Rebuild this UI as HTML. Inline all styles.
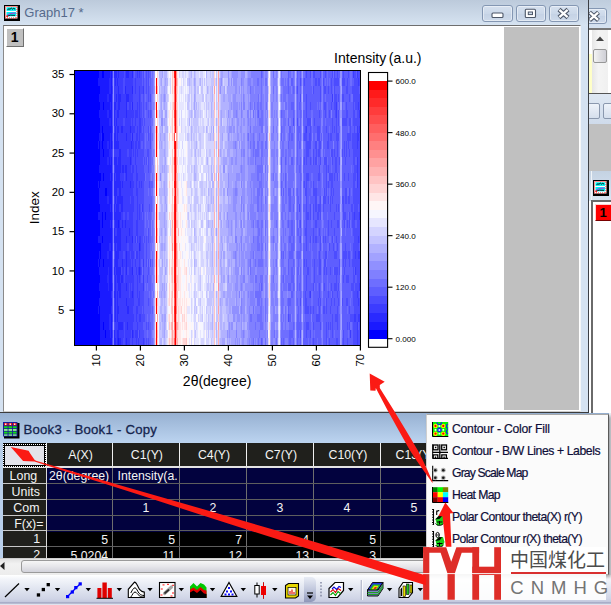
<!DOCTYPE html>
<html><head><meta charset="utf-8"><title>Graph17</title>
<style>

html,body{margin:0;padding:0;background:#fff}
#root{position:relative;width:611px;height:605px;overflow:hidden;background:#fff;font-family:"Liberation Sans","Noto Sans CJK SC",sans-serif;}
#root div,#root svg,#root span{position:absolute;box-sizing:border-box}
.t{white-space:nowrap;line-height:1}
svg text{font-family:"Liberation Sans","Noto Sans CJK SC",sans-serif}
.wbtn{border:1px solid #8497b3;border-radius:3px;background:linear-gradient(#d6e1ef,#cbd8e9 50%,#c4d2e5 51%,#cedaea);box-shadow:inset 0 0 0 1px rgba(255,255,255,.45)}
.cell{color:#f4f4f4;font-size:12px;line-height:15px;white-space:nowrap;overflow:hidden}
.mi{left:452px;font-size:12px;color:#0e0e38;-webkit-text-stroke:.2px #0e0e38;white-space:nowrap;line-height:14px;height:14px}

</style></head><body>
<div id="root">

<div style="left:588px;top:0;width:23px;height:29px;background:linear-gradient(#bfcddd,#d6e3f1)"></div>
<div class="wbtn" style="left:577px;top:8px;width:30px;height:16px"></div>
<svg style="left:589px;top:8px" width="20" height="16" viewBox="589 8 20 16"><path d="M589.500 12.300l9 8M598.500 12.300l-9 8" stroke="#4d5768" stroke-width="4.400" fill="none"/><path d="M589.900 12.700l8.200 7.200M598.100 12.700l-8.200 7.200" stroke="#fff" stroke-width="2.300" fill="none"/></svg>
<div style="left:588px;top:28px;width:23px;height:1.5px;background:#777"></div>
<div style="left:588px;top:29.5px;width:23px;height:63.5px;background:#fff"></div>
<div style="left:589px;top:53.5px;width:3px;height:39px;background:#ffffc8"></div>
<div style="left:592px;top:30px;width:16px;height:63px;background:linear-gradient(90deg,#e6e6e6,#f4f4f4 40%,#f0f0f0)"></div>
<svg style="left:592px;top:30px" width="16" height="16"><path d="M4 11l4-4.5 4 4.5z" fill="#444"/></svg>
<div style="left:592.5px;top:48.5px;width:14.5px;height:14.5px;border:1px solid #979797;border-radius:2px;background:linear-gradient(90deg,#f4f4f4,#dcdce0 60%,#cfcfd6)"></div>
<div style="left:588px;top:92.5px;width:23px;height:1.5px;background:#555"></div>
<div style="left:588px;top:94px;width:23px;height:30px;background:linear-gradient(#dfe8f3,#cfdbeb)"></div>
<div style="left:584px;top:103px;width:15.5px;height:16px;border:1px solid #8a98ae;border-radius:2px;background:linear-gradient(#eef3fa,#d5dfed)"></div>
<div style="left:603px;top:103px;width:15px;height:16px;border:1px solid #8a98ae;border-radius:2px;background:linear-gradient(#eef3fa,#d5dfed)"></div>
<div style="left:588px;top:124px;width:23px;height:47px;background:#c0c0c0"></div>
<div style="left:588px;top:171px;width:23px;height:30px;background:linear-gradient(#c4d2e2,#d8e5f3)"></div>
<div style="left:588px;top:201px;width:23px;height:215px;background:#fff"></div>
<div style="left:590.5px;top:171px;width:1px;height:243px;background:#f0f4f8"></div>
<div style="left:591px;top:201px;width:2px;height:213px;background:#6a6a6a"></div>
<div style="left:591px;top:200px;width:20px;height:1.5px;background:#6a6a6a"></div>
<svg style="left:593px;top:180px" width="16" height="16" viewBox="0 0 16 16"><rect x="0" y="0" width="16" height="16" fill="#000"/><rect x="1" y="1" width="12.5" height="12.5" fill="#fff"/>
<rect x="1.5" y="1.5" width="11.5" height="11.5" fill="none" stroke="#ff2020" stroke-width="1" stroke-dasharray="1 1"/>
<rect x="2.5" y="2.3" width="9.7" height="3.6" fill="#00f0f0"/><rect x="2.5" y="7" width="9.7" height="4.3" fill="#00f0f0"/>
<path d="M3.5 4.6l1.5-.8 1 .5 1.3-1.2 1.2 1 1.2-.8 1.4.9" stroke="#000" stroke-width=".9" fill="none"/>
<path d="M3 10.5c2-2 5-2.6 8.5-2.4" stroke="#c020e0" stroke-width="1" fill="none"/><path d="M3.5 11l3-.8 4.5.2" stroke="#000" stroke-width=".8" fill="none"/>
<rect x="2.3" y="10.5" width="1.6" height="1.6" fill="#ff0000"/></svg>
<div style="left:595px;top:204px;width:17px;height:16.5px;background:#ff0000;border-top:1px solid #ffd0d0;border-left:1px solid #ffd0d0;border-bottom:1px solid #7a0000"></div>
<div class="t" style="left:599.5px;top:205.5px;font-size:13px;font-weight:bold;color:#000">1</div>


<div style="left:0;top:0;width:588.5px;height:413px;background:#d5e2f1"></div>
<div style="left:0;top:0;width:588px;height:26px;background:linear-gradient(#bccadb,#d7e4f2)"></div>
<div style="left:587.6px;top:0;width:1.7px;height:413px;background:#3c3f45"></div>
<div style="left:2.5px;top:25px;width:578px;height:386.5px;background:#fff;border-top:1.5px solid #6e6e6e;border-left:1.5px solid #8a8a8a;border-right:1.5px solid #f4f6f8;border-bottom:1.5px solid #cdcdcd"></div>
<div style="left:504px;top:26.5px;width:75px;height:383.5px;background:#c0c0c0"></div>
<div style="left:0;top:412px;width:588px;height:1px;background:#3c3c3c"></div>
<svg style="left:4px;top:5px" width="16" height="16" viewBox="0 0 16 16"><rect x="0" y="0" width="16" height="16" fill="#000"/><rect x="1" y="1" width="12.5" height="12.5" fill="#fff"/>
<rect x="1.5" y="1.5" width="11.5" height="11.5" fill="none" stroke="#ff2020" stroke-width="1" stroke-dasharray="1 1"/>
<rect x="2.5" y="2.3" width="9.7" height="3.6" fill="#00f0f0"/><rect x="2.5" y="7" width="9.7" height="4.3" fill="#00f0f0"/>
<path d="M3.5 4.6l1.5-.8 1 .5 1.3-1.2 1.2 1 1.2-.8 1.4.9" stroke="#000" stroke-width=".9" fill="none"/>
<path d="M3 10.5c2-2 5-2.6 8.5-2.4" stroke="#c020e0" stroke-width="1" fill="none"/><path d="M3.5 11l3-.8 4.5.2" stroke="#000" stroke-width=".8" fill="none"/>
<rect x="2.3" y="10.5" width="1.6" height="1.6" fill="#ff0000"/></svg>
<div class="t" style="left:24.3px;top:6.2px;font-size:13px;color:#566a8c">Graph17 *</div>
<div class="wbtn" style="left:482px;top:5px;width:31px;height:16.5px"></div>
<div class="wbtn" style="left:515.5px;top:5px;width:30.5px;height:16.5px"></div>
<div class="wbtn" style="left:548.5px;top:5px;width:30.5px;height:16.5px"></div>
<svg style="left:482px;top:5px" width="100" height="17" viewBox="482 5 100 17">
<rect x="492" y="13" width="11" height="4.500" rx="1" fill="#fff" stroke="#4d5768" stroke-width="1.100"/>
<rect x="525.300" y="9.200" width="10.200" height="8.300" rx="1" fill="#fff" stroke="#4d5768" stroke-width="1.100"/><rect x="528.300" y="12" width="4.200" height="2.600" fill="#cfdbea" stroke="#4d5768" stroke-width="1"/>
<path d="M559 9.500l9 8M568 9.500l-9 8" stroke="#4d5768" stroke-width="4.400" fill="none"/><path d="M559.400 9.900l8.200 7.200M567.600 9.900l-8.200 7.200" stroke="#fff" stroke-width="2.300" fill="none"/>
</svg>
<div style="left:5.5px;top:28px;width:18.5px;height:18.5px;background:#c0c0c0;border-top:1.5px solid #fff;border-left:1.5px solid #fff;border-right:1.5px solid #707070;border-bottom:1.5px solid #707070"></div>
<div class="t" style="left:10.8px;top:30.2px;font-size:14px;font-weight:bold;color:#000">1</div>
<svg style="left:0;top:0" width="611" height="605" viewBox="0 0 611 605">
<g fill="none" stroke-width="1" shape-rendering="crispEdges"><path stroke="#0000ff" d="M75.5 71V345M76.5 71V345M77.5 71V345M78.5 71V345M79.5 71V345M80.5 71V345M81.5 71V345M82.5 71V345M83.5 71V345M84.5 71V345M85.5 71V345M86.5 71V345M87.5 71V345M88.5 71V345M89.5 71V345M90.5 71V345M91.5 71V345M92.5 71V345M93.5 71V345M94.5 71V345M95.5 71V345M96.5 71V345M97.5 71V345M98.5 71V78M98.5 86V141M98.5 149V181M98.5 188V212M98.5 220V236M98.5 243V259M98.5 267V306M98.5 314V345M99.5 86V94M99.5 102V110M99.5 118V133M99.5 141V165M99.5 173V188M99.5 204V212M99.5 220V236M99.5 243V251M99.5 259V267M99.5 275V283M99.5 291V298M99.5 306V345M100.5 173V181M100.5 243V259M102.5 71V78M102.5 126V149M102.5 212V228M102.5 236V243M103.5 71V78M103.5 102V110M103.5 133V141M103.5 149V157M103.5 173V181M103.5 259V267M103.5 322V330M105.5 188V196M105.5 212V220M105.5 330V338M106.5 188V196"/><path stroke="#1a1aff" d="M98.5 78V86M98.5 141V149M98.5 181V188M98.5 212V220M98.5 236V243M98.5 259V267M98.5 306V314M99.5 71V86M99.5 94V102M99.5 110V118M99.5 133V141M99.5 165V173M99.5 188V204M99.5 212V220M99.5 236V243M99.5 251V259M99.5 267V275M99.5 283V291M99.5 298V306M100.5 71V173M100.5 181V243M100.5 259V345M101.5 71V133M101.5 141V345M102.5 78V126M102.5 149V212M102.5 228V236M102.5 243V345M103.5 78V102M103.5 110V133M103.5 141V149M103.5 157V173M103.5 181V259M103.5 267V322M103.5 330V345M104.5 71V345M105.5 71V188M105.5 196V212M105.5 220V330M105.5 338V345M106.5 71V188M106.5 196V345M107.5 71V94M107.5 102V110M107.5 118V141M107.5 149V157M107.5 165V196M107.5 204V251M107.5 259V275M107.5 283V345M108.5 71V94M108.5 102V110M108.5 118V141M108.5 149V157M108.5 165V196M108.5 204V251M108.5 259V267M108.5 291V345M109.5 71V78M109.5 94V118M109.5 126V149M109.5 157V243M109.5 251V314M109.5 330V345M110.5 94V102M110.5 110V118M110.5 126V133M110.5 165V173M110.5 181V204M110.5 212V220M110.5 228V243M110.5 251V314M110.5 338V345M111.5 71V149M111.5 157V291M111.5 298V306M111.5 314V345M118.5 220V228M118.5 338V345"/><path stroke="#2a2aff" d="M101.5 133V141M107.5 94V102M107.5 110V118M107.5 141V149M107.5 157V165M107.5 196V204M107.5 251V259M107.5 275V283M108.5 94V102M108.5 110V118M108.5 141V149M108.5 157V165M108.5 196V204M108.5 251V259M108.5 267V291M109.5 78V94M109.5 118V126M109.5 149V157M109.5 243V251M109.5 314V330M110.5 71V94M110.5 102V110M110.5 118V126M110.5 133V165M110.5 173V181M110.5 204V212M110.5 220V228M110.5 243V251M110.5 314V338M111.5 149V157M111.5 291V298M111.5 306V314M114.5 71V78M114.5 102V126M114.5 133V149M114.5 157V165M114.5 173V196M114.5 204V220M114.5 228V243M114.5 267V275M114.5 291V298M114.5 330V345M115.5 71V86M115.5 102V110M115.5 126V149M115.5 157V173M115.5 181V204M115.5 212V228M115.5 236V267M115.5 275V322M115.5 338V345M116.5 71V78M116.5 94V102M116.5 118V126M116.5 141V149M116.5 157V196M116.5 204V228M116.5 236V243M116.5 251V275M117.5 78V86M117.5 110V118M117.5 126V149M117.5 165V188M117.5 196V283M117.5 291V322M117.5 330V345M118.5 71V78M118.5 86V118M118.5 126V133M118.5 141V149M118.5 157V188M118.5 196V220M118.5 228V259M118.5 267V291M118.5 306V314M118.5 322V338M119.5 94V110M119.5 149V204M119.5 212V251M119.5 267V298M119.5 322V330M119.5 338V345M120.5 94V102M120.5 149V173M120.5 181V204M120.5 212V220M120.5 228V251M120.5 267V275M120.5 283V298M120.5 322V330M120.5 338V345M121.5 126V133M121.5 196V212M121.5 275V283M121.5 322V330M122.5 126V133M122.5 165V173M122.5 181V188M122.5 196V212M122.5 220V228M122.5 259V267M122.5 275V283M122.5 322V330M123.5 165V173M125.5 86V94M125.5 165V173M125.5 220V228M126.5 71V78M126.5 94V118M126.5 133V141M126.5 165V181M126.5 236V243M126.5 251V275M126.5 283V291M126.5 298V306M126.5 338V345M127.5 71V78M127.5 94V102M127.5 306V314M127.5 322V330M128.5 71V78M128.5 94V102M128.5 306V314M129.5 228V236M130.5 126V133M130.5 157V165M130.5 181V188M131.5 141V149M132.5 71V78M132.5 86V94M132.5 102V110M132.5 133V141M132.5 236V243M132.5 267V275M132.5 291V298M132.5 330V338M139.5 243V251M139.5 267V275"/><path stroke="#3c3cff" d="M112.5 71V78M112.5 86V94M112.5 126V133M112.5 141V149M112.5 173V181M112.5 212V220M112.5 228V251M112.5 283V291M112.5 314V322M112.5 330V338M114.5 78V102M114.5 126V133M114.5 149V157M114.5 165V173M114.5 196V204M114.5 220V228M114.5 243V251M114.5 259V267M114.5 275V291M114.5 298V322M115.5 86V102M115.5 110V126M115.5 149V157M115.5 173V181M115.5 204V212M115.5 228V236M115.5 267V275M115.5 322V338M116.5 78V94M116.5 102V118M116.5 126V141M116.5 149V157M116.5 196V204M116.5 228V236M116.5 243V251M116.5 275V345M117.5 71V78M117.5 86V110M117.5 118V126M117.5 149V165M117.5 188V196M117.5 283V291M117.5 322V330M118.5 78V86M118.5 118V126M118.5 133V141M118.5 149V157M118.5 188V196M118.5 259V267M118.5 291V306M118.5 314V322M119.5 71V94M119.5 110V149M119.5 204V212M119.5 251V267M119.5 298V322M119.5 330V338M120.5 71V94M120.5 102V149M120.5 173V181M120.5 204V212M120.5 220V228M120.5 251V267M120.5 275V283M120.5 298V322M120.5 330V338M121.5 71V126M121.5 133V196M121.5 212V267M121.5 283V322M121.5 330V345M122.5 71V126M122.5 133V165M122.5 173V181M122.5 188V196M122.5 212V220M122.5 228V259M122.5 267V275M122.5 283V322M122.5 330V345M123.5 71V78M123.5 94V118M123.5 126V165M123.5 173V212M123.5 220V251M123.5 259V338M124.5 94V118M124.5 126V173M124.5 181V212M124.5 220V251M124.5 259V267M124.5 283V322M125.5 71V86M125.5 94V165M125.5 173V220M125.5 228V345M126.5 78V94M126.5 118V133M126.5 141V165M126.5 181V236M126.5 243V251M126.5 275V283M126.5 291V298M126.5 306V338M127.5 78V94M127.5 110V149M127.5 157V212M127.5 220V243M127.5 251V267M127.5 275V306M127.5 314V322M127.5 330V345M128.5 78V94M128.5 110V149M128.5 157V212M128.5 220V243M128.5 251V267M128.5 275V306M128.5 314V345M129.5 71V228M129.5 236V283M129.5 298V345M130.5 71V126M130.5 133V157M130.5 165V181M130.5 188V196M130.5 204V251M130.5 259V338M131.5 71V102M131.5 110V118M131.5 126V133M131.5 149V165M131.5 173V259M131.5 267V283M131.5 291V330M132.5 78V86M132.5 94V102M132.5 110V133M132.5 141V149M132.5 165V236M132.5 243V267M132.5 275V291M132.5 298V330M132.5 338V345M133.5 110V118M133.5 126V133M133.5 141V157M133.5 165V173M133.5 181V188M133.5 196V212M133.5 251V259M133.5 275V306M133.5 314V322M133.5 330V338M134.5 126V133M135.5 78V94M135.5 110V126M135.5 141V165M135.5 236V243M135.5 259V267M135.5 330V338M136.5 110V118M136.5 133V149M136.5 165V196M136.5 220V236M136.5 251V259M136.5 267V275M136.5 306V322M136.5 330V345M137.5 71V78M137.5 102V118M137.5 126V141M137.5 149V157M137.5 173V181M137.5 188V243M137.5 251V259M137.5 275V298M137.5 306V314M137.5 322V338M138.5 141V149M138.5 267V275M138.5 298V306M138.5 338V345M139.5 71V78M139.5 86V149M139.5 181V188M139.5 204V220M139.5 236V243M139.5 251V267M139.5 275V283M139.5 291V306M139.5 314V322M139.5 330V338M140.5 118V133M140.5 236V251M140.5 267V275M140.5 314V322M141.5 181V188M142.5 204V212M143.5 86V94M143.5 259V267M143.5 275V291M143.5 338V345M306.5 126V133M310.5 291V298M332.5 94V102M336.5 102V118M350.5 330V338M353.5 71V78M354.5 212V220M354.5 314V322M355.5 251V259M355.5 267V275M355.5 314V322M357.5 71V78M357.5 126V149M357.5 157V188M357.5 291V298M357.5 322V345M358.5 78V86M358.5 102V110M358.5 133V141M358.5 236V243M358.5 251V259M358.5 298V306M358.5 314V322M359.5 110V118M359.5 126V133M359.5 212V220M359.5 251V259M359.5 283V291M359.5 314V322"/><path stroke="#4c4cff" d="M112.5 78V86M112.5 94V126M112.5 133V141M112.5 149V173M112.5 181V212M112.5 220V228M112.5 251V283M112.5 291V314M112.5 322V330M112.5 338V345M114.5 251V259M114.5 322V330M121.5 267V275M123.5 78V94M123.5 118V126M123.5 212V220M123.5 251V259M123.5 338V345M124.5 71V94M124.5 118V126M124.5 173V181M124.5 212V220M124.5 251V259M124.5 267V283M124.5 322V345M127.5 102V110M127.5 149V157M127.5 212V220M127.5 243V251M127.5 267V275M128.5 102V110M128.5 149V157M128.5 212V220M128.5 243V251M128.5 267V275M129.5 283V298M130.5 196V204M130.5 251V259M130.5 338V345M131.5 102V110M131.5 118V126M131.5 133V141M131.5 165V173M131.5 259V267M131.5 283V291M131.5 330V345M132.5 149V165M133.5 71V110M133.5 118V126M133.5 133V141M133.5 157V165M133.5 173V181M133.5 188V196M133.5 212V251M133.5 259V275M133.5 306V314M133.5 322V330M133.5 338V345M134.5 78V126M134.5 133V345M135.5 71V78M135.5 94V110M135.5 126V141M135.5 165V236M135.5 243V251M135.5 267V330M135.5 338V345M136.5 71V110M136.5 118V133M136.5 149V165M136.5 196V220M136.5 243V251M136.5 259V267M136.5 275V306M136.5 322V330M137.5 78V102M137.5 118V126M137.5 141V149M137.5 157V173M137.5 181V188M137.5 243V251M137.5 259V275M137.5 298V306M137.5 314V322M137.5 338V345M138.5 71V141M138.5 149V267M138.5 275V298M138.5 306V330M139.5 78V86M139.5 149V181M139.5 188V204M139.5 220V236M139.5 283V291M139.5 306V314M139.5 322V330M139.5 338V345M140.5 71V118M140.5 133V236M140.5 251V267M140.5 275V314M140.5 322V345M141.5 71V94M141.5 102V141M141.5 149V181M141.5 188V204M141.5 212V259M141.5 267V275M141.5 283V345M142.5 86V94M142.5 118V126M142.5 133V141M142.5 149V204M142.5 220V259M142.5 283V306M142.5 314V345M143.5 71V86M143.5 94V118M143.5 126V157M143.5 165V236M143.5 243V259M143.5 267V275M143.5 291V322M143.5 330V338M144.5 118V126M144.5 157V165M144.5 173V181M144.5 236V243M144.5 314V322M144.5 338V345M146.5 71V94M146.5 102V110M146.5 157V165M146.5 236V267M146.5 322V330M146.5 338V345M147.5 149V157M147.5 275V283M148.5 71V102M148.5 110V118M148.5 126V141M148.5 149V173M148.5 228V243M148.5 259V275M148.5 298V306M148.5 322V330M148.5 338V345M149.5 181V188M149.5 204V212M150.5 94V102M150.5 110V118M150.5 126V149M150.5 259V267M288.5 314V322M293.5 118V126M297.5 86V94M297.5 118V126M299.5 204V212M300.5 78V86M300.5 94V102M300.5 220V228M300.5 236V243M300.5 298V306M300.5 330V338M304.5 78V86M304.5 133V141M304.5 157V165M304.5 181V188M304.5 259V267M305.5 126V141M305.5 188V196M305.5 228V236M305.5 291V314M306.5 71V78M306.5 94V118M306.5 133V165M306.5 173V251M306.5 259V267M306.5 275V291M306.5 298V314M306.5 322V338M307.5 118V126M307.5 141V157M307.5 173V181M307.5 212V220M307.5 267V275M307.5 306V314M307.5 322V330M308.5 118V126M308.5 141V157M308.5 173V181M308.5 212V220M308.5 267V275M308.5 306V314M308.5 322V330M309.5 118V126M309.5 133V149M309.5 291V298M310.5 71V78M310.5 102V110M310.5 118V149M310.5 157V165M310.5 204V220M310.5 236V243M310.5 306V314M310.5 330V338M313.5 71V78M313.5 86V94M313.5 149V165M313.5 181V196M313.5 204V220M313.5 228V243M313.5 283V291M313.5 306V314M313.5 322V330M313.5 338V345M314.5 71V78M314.5 118V126M314.5 188V196M314.5 259V283M315.5 78V86M315.5 141V149M315.5 157V165M315.5 188V212M315.5 220V228M315.5 236V243M316.5 78V86M316.5 141V165M316.5 188V212M316.5 220V228M316.5 236V243M316.5 314V322M317.5 126V141M317.5 212V220M317.5 314V322M318.5 78V86M318.5 126V141M318.5 149V157M318.5 173V181M318.5 204V220M318.5 298V306M318.5 314V322M319.5 78V86M319.5 110V118M319.5 126V157M319.5 165V181M319.5 204V212M319.5 228V236M319.5 251V275M319.5 283V298M319.5 306V322M320.5 71V78M320.5 86V102M320.5 141V149M320.5 157V165M320.5 196V220M320.5 236V251M320.5 259V275M320.5 298V306M320.5 322V330M323.5 78V86M323.5 196V212M323.5 236V243M323.5 306V314M324.5 86V94M324.5 102V110M324.5 157V165M324.5 188V204M324.5 259V275M324.5 283V291M324.5 306V314M325.5 71V78M325.5 86V94M325.5 102V118M325.5 157V165M325.5 196V204M325.5 236V243M325.5 251V267M326.5 126V133M326.5 157V196M326.5 251V259M326.5 267V275M326.5 298V314M326.5 322V345M327.5 141V149M328.5 86V94M328.5 133V149M328.5 165V173M328.5 181V188M328.5 196V204M328.5 220V236M328.5 291V298M328.5 322V330M329.5 110V118M329.5 173V181M329.5 243V251M329.5 338V345M330.5 133V141M330.5 173V181M330.5 196V212M330.5 267V275M330.5 306V314M330.5 322V330M331.5 78V94M331.5 102V110M331.5 133V141M331.5 149V157M331.5 173V196M331.5 220V228M331.5 283V291M331.5 298V306M332.5 71V78M332.5 118V133M332.5 149V165M332.5 173V188M332.5 196V204M332.5 236V243M332.5 291V298M332.5 314V338M333.5 188V196M333.5 243V251M334.5 71V110M334.5 126V133M334.5 149V157M334.5 173V181M334.5 212V220M334.5 228V236M334.5 251V259M334.5 267V275M334.5 283V291M334.5 298V306M335.5 78V86M335.5 94V118M335.5 157V173M335.5 251V259M335.5 267V275M335.5 283V291M335.5 314V322M336.5 78V86M336.5 94V102M336.5 118V141M336.5 157V173M336.5 204V212M336.5 236V243M336.5 251V259M336.5 267V291M336.5 314V322M336.5 338V345M337.5 71V86M337.5 133V157M337.5 173V181M337.5 220V228M337.5 243V251M337.5 267V275M337.5 291V298M337.5 306V330M337.5 338V345M338.5 78V86M338.5 94V102M338.5 110V126M338.5 133V141M338.5 204V212M338.5 220V228M338.5 283V291M338.5 298V306M339.5 157V165M339.5 259V275M342.5 78V86M342.5 94V102M342.5 118V126M342.5 149V157M342.5 196V204M342.5 298V306M343.5 71V86M343.5 94V102M343.5 118V126M343.5 196V220M343.5 251V267M343.5 275V283M343.5 330V345M344.5 78V86M344.5 118V126M344.5 141V157M344.5 173V181M344.5 212V228M344.5 251V259M344.5 267V275M345.5 118V126M345.5 157V165M345.5 188V204M345.5 212V220M345.5 243V267M346.5 86V94M346.5 102V126M346.5 141V157M346.5 188V204M346.5 251V259M346.5 275V283M346.5 298V306M347.5 78V94M347.5 110V118M347.5 133V141M347.5 220V228M347.5 275V283M347.5 298V306M347.5 322V330M347.5 338V345M348.5 71V78M348.5 133V149M348.5 173V181M348.5 196V204M348.5 251V259M348.5 275V283M349.5 94V102M349.5 118V126M349.5 133V141M349.5 149V157M349.5 188V204M349.5 212V228M349.5 251V267M349.5 306V314M349.5 322V330M350.5 118V141M350.5 314V322M351.5 204V212M351.5 283V291M351.5 314V322M352.5 86V94M352.5 133V149M352.5 204V228M352.5 259V267M352.5 283V291M352.5 314V322M353.5 86V126M353.5 133V165M353.5 173V204M353.5 212V236M353.5 243V306M353.5 314V345M354.5 71V102M354.5 110V212M354.5 220V267M354.5 275V283M354.5 291V314M354.5 322V345M355.5 71V110M355.5 118V126M355.5 133V157M355.5 165V181M355.5 188V220M355.5 228V251M355.5 259V267M355.5 283V314M355.5 322V345M356.5 78V110M356.5 118V126M356.5 133V157M356.5 165V173M356.5 188V220M356.5 228V275M356.5 283V345M357.5 78V126M357.5 149V157M357.5 188V291M357.5 298V322M358.5 71V78M358.5 86V102M358.5 110V133M358.5 141V204M358.5 212V236M358.5 243V251M358.5 259V298M358.5 306V314M358.5 330V345M359.5 71V86M359.5 94V110M359.5 118V126M359.5 133V212M359.5 220V243M359.5 259V283M359.5 298V314M359.5 322V345"/><path stroke="#5e5eff" d="M134.5 71V78M135.5 251V259M136.5 236V243M138.5 330V338M141.5 94V102M141.5 141V149M141.5 204V212M141.5 259V267M141.5 275V283M142.5 71V86M142.5 94V118M142.5 126V133M142.5 141V149M142.5 212V220M142.5 259V267M142.5 275V283M142.5 306V314M143.5 118V126M143.5 157V165M143.5 236V243M143.5 322V330M144.5 78V118M144.5 126V157M144.5 165V173M144.5 181V236M144.5 243V314M144.5 322V338M145.5 71V94M145.5 102V110M145.5 118V133M145.5 149V173M145.5 181V212M145.5 228V283M145.5 291V345M146.5 94V102M146.5 110V157M146.5 165V236M146.5 267V322M146.5 330V338M147.5 71V133M147.5 141V149M147.5 165V212M147.5 220V228M147.5 236V259M147.5 267V275M147.5 291V314M147.5 322V330M147.5 338V345M148.5 102V110M148.5 118V126M148.5 141V149M148.5 173V188M148.5 196V220M148.5 243V259M148.5 275V298M148.5 306V322M148.5 330V338M149.5 71V78M149.5 86V102M149.5 110V126M149.5 133V181M149.5 188V204M149.5 212V259M149.5 267V291M149.5 298V345M150.5 71V94M150.5 102V110M150.5 118V126M150.5 149V173M150.5 181V243M150.5 275V314M150.5 322V345M151.5 110V118M151.5 181V188M151.5 196V212M152.5 181V188M152.5 259V267M152.5 306V314M258.5 110V118M261.5 71V78M261.5 283V291M261.5 338V345M281.5 110V118M281.5 126V141M281.5 157V173M281.5 181V196M281.5 251V259M281.5 338V345M283.5 188V196M283.5 251V259M283.5 275V283M283.5 338V345M285.5 157V165M285.5 173V188M288.5 71V94M288.5 118V126M288.5 141V149M288.5 188V196M288.5 220V228M288.5 259V275M288.5 283V291M288.5 298V314M289.5 126V141M289.5 188V212M289.5 236V243M289.5 251V259M289.5 283V291M289.5 298V306M289.5 314V322M289.5 330V345M290.5 126V133M290.5 188V212M290.5 236V243M290.5 251V259M290.5 283V291M290.5 298V306M290.5 314V322M290.5 330V345M291.5 78V86M291.5 102V110M291.5 133V141M291.5 157V165M291.5 220V236M291.5 243V259M291.5 267V283M291.5 291V298M291.5 330V338M292.5 78V86M292.5 102V110M292.5 133V141M292.5 157V165M292.5 220V236M292.5 243V259M292.5 267V283M292.5 291V298M292.5 330V338M293.5 86V94M293.5 102V118M293.5 188V196M293.5 204V212M293.5 236V251M293.5 259V267M293.5 275V291M293.5 322V330M293.5 338V345M297.5 71V86M297.5 94V118M297.5 126V165M297.5 188V236M297.5 251V259M297.5 267V291M297.5 298V306M297.5 314V345M298.5 126V141M298.5 196V204M298.5 228V236M298.5 251V275M298.5 306V338M299.5 102V110M299.5 126V133M299.5 141V149M299.5 165V173M299.5 220V228M299.5 236V243M299.5 251V259M299.5 283V291M299.5 322V330M300.5 71V78M300.5 86V94M300.5 102V149M300.5 157V220M300.5 228V236M300.5 243V259M300.5 267V298M300.5 306V330M300.5 338V345M303.5 78V102M303.5 110V126M303.5 133V141M303.5 157V173M303.5 181V188M303.5 204V212M303.5 243V275M303.5 291V306M303.5 338V345M304.5 86V102M304.5 110V133M304.5 149V157M304.5 165V181M304.5 204V212M304.5 220V236M304.5 243V259M304.5 267V314M304.5 322V345M305.5 71V126M305.5 141V188M305.5 204V228M305.5 236V291M305.5 314V345M306.5 78V94M306.5 118V126M306.5 165V173M306.5 251V259M306.5 267V275M306.5 291V298M306.5 314V322M306.5 338V345M307.5 71V118M307.5 126V141M307.5 157V173M307.5 181V212M307.5 220V267M307.5 275V306M307.5 314V322M307.5 330V345M308.5 71V118M308.5 126V141M308.5 157V173M308.5 181V212M308.5 220V267M308.5 275V306M308.5 314V322M308.5 330V338M309.5 71V118M309.5 126V133M309.5 149V181M309.5 188V196M309.5 204V243M309.5 251V291M309.5 298V345M310.5 78V102M310.5 110V118M310.5 149V157M310.5 165V204M310.5 220V236M310.5 243V291M310.5 298V306M310.5 314V330M310.5 338V345M311.5 86V110M311.5 126V141M311.5 157V173M311.5 181V188M311.5 196V204M311.5 228V236M311.5 283V291M311.5 306V314M312.5 94V110M312.5 165V173M312.5 196V204M312.5 228V251M312.5 259V267M312.5 283V291M312.5 306V322M312.5 338V345M313.5 78V86M313.5 94V149M313.5 165V181M313.5 196V204M313.5 220V228M313.5 243V283M313.5 291V306M313.5 314V322M313.5 330V338M314.5 78V118M314.5 126V188M314.5 196V259M314.5 291V330M314.5 338V345M315.5 71V78M315.5 86V133M315.5 149V157M315.5 165V188M315.5 212V220M315.5 228V236M315.5 243V345M316.5 71V78M316.5 86V133M316.5 165V188M316.5 212V220M316.5 228V236M316.5 243V314M316.5 322V345M317.5 71V102M317.5 110V126M317.5 149V157M317.5 165V181M317.5 188V196M317.5 204V212M317.5 220V228M317.5 236V243M317.5 259V267M317.5 275V283M317.5 291V306M317.5 322V338M318.5 71V78M318.5 86V126M318.5 141V149M318.5 157V173M318.5 181V196M318.5 220V243M318.5 251V298M318.5 306V314M318.5 322V345M319.5 71V78M319.5 86V102M319.5 118V126M319.5 157V165M319.5 181V204M319.5 212V228M319.5 236V251M319.5 275V283M319.5 298V306M319.5 322V345M320.5 78V86M320.5 102V133M320.5 149V157M320.5 173V196M320.5 220V236M320.5 251V259M320.5 275V298M320.5 306V322M320.5 330V345M321.5 133V141M323.5 71V78M323.5 86V157M323.5 165V188M323.5 212V220M323.5 228V236M323.5 243V259M323.5 267V306M323.5 314V345M324.5 71V86M324.5 94V102M324.5 110V149M324.5 165V188M324.5 204V228M324.5 236V259M324.5 275V283M324.5 291V306M324.5 314V345M325.5 126V157M325.5 165V196M325.5 204V236M325.5 243V251M325.5 267V298M325.5 306V345M326.5 71V126M326.5 133V157M326.5 196V228M326.5 236V251M326.5 275V298M326.5 314V322M327.5 86V102M327.5 118V141M327.5 149V157M327.5 165V173M327.5 181V188M327.5 196V212M327.5 220V243M327.5 259V275M327.5 291V338M328.5 71V86M328.5 94V133M328.5 149V165M328.5 188V196M328.5 204V220M328.5 236V243M328.5 251V291M328.5 298V322M328.5 330V345M329.5 71V78M329.5 86V110M329.5 118V126M329.5 133V173M329.5 181V188M329.5 204V236M329.5 251V283M329.5 291V330M330.5 71V133M330.5 141V149M330.5 157V173M330.5 181V196M330.5 212V236M330.5 243V267M330.5 275V306M330.5 314V322M330.5 330V345M331.5 71V78M331.5 94V102M331.5 118V133M331.5 141V149M331.5 196V220M331.5 228V283M331.5 306V345M332.5 78V94M332.5 102V118M332.5 133V149M332.5 165V173M332.5 188V196M332.5 204V236M332.5 243V291M332.5 298V314M332.5 338V345M333.5 78V86M333.5 102V141M333.5 149V188M333.5 196V236M333.5 251V267M333.5 275V345M334.5 110V126M334.5 133V149M334.5 157V173M334.5 181V212M334.5 220V228M334.5 236V251M334.5 259V267M334.5 275V283M334.5 291V298M334.5 306V330M334.5 338V345M335.5 71V78M335.5 86V94M335.5 118V157M335.5 173V243M335.5 259V267M335.5 275V283M335.5 291V314M335.5 322V345M336.5 71V78M336.5 86V94M336.5 141V157M336.5 173V204M336.5 212V236M336.5 243V251M336.5 259V267M336.5 291V314M336.5 322V338M337.5 86V133M337.5 157V173M337.5 181V220M337.5 228V243M337.5 251V267M337.5 275V291M337.5 298V306M337.5 330V338M338.5 71V78M338.5 86V94M338.5 126V133M338.5 141V173M338.5 181V204M338.5 212V220M338.5 228V283M338.5 291V298M338.5 306V345M339.5 71V78M339.5 86V110M339.5 126V133M339.5 165V243M339.5 275V283M339.5 291V306M339.5 314V345M342.5 71V78M342.5 86V94M342.5 102V118M342.5 126V149M342.5 157V196M342.5 204V212M342.5 220V298M342.5 306V330M342.5 338V345M343.5 86V94M343.5 110V118M343.5 126V196M343.5 220V251M343.5 267V275M343.5 283V330M344.5 71V78M344.5 86V102M344.5 110V118M344.5 126V141M344.5 157V173M344.5 181V212M344.5 228V251M344.5 259V267M344.5 275V345M345.5 71V118M345.5 126V157M345.5 165V188M345.5 204V212M345.5 236V243M345.5 267V345M346.5 71V86M346.5 94V102M346.5 126V141M346.5 157V188M346.5 204V251M346.5 259V275M346.5 283V298M346.5 306V345M347.5 71V78M347.5 94V110M347.5 118V133M347.5 141V188M347.5 196V220M347.5 228V275M347.5 283V298M347.5 314V322M347.5 330V338M348.5 78V126M348.5 149V173M348.5 181V188M348.5 204V212M348.5 220V251M348.5 259V275M348.5 283V330M348.5 338V345M349.5 71V94M349.5 102V118M349.5 126V133M349.5 141V149M349.5 157V188M349.5 204V212M349.5 228V251M349.5 267V306M349.5 314V322M349.5 330V345M350.5 86V118M350.5 141V220M350.5 228V243M350.5 251V298M350.5 306V314M350.5 338V345M351.5 86V94M351.5 102V118M351.5 126V165M351.5 173V188M351.5 196V204M351.5 212V228M351.5 236V251M351.5 259V283M351.5 298V314M351.5 330V345M352.5 71V86M352.5 102V133M352.5 149V204M352.5 228V259M352.5 267V283M352.5 291V314M352.5 322V345M353.5 78V86M353.5 126V133M353.5 165V173M353.5 204V212M353.5 236V243M353.5 306V314M354.5 102V110M354.5 267V275M354.5 283V291M355.5 110V118M355.5 126V133M355.5 157V165M355.5 181V188M355.5 220V228M355.5 275V283M356.5 71V78M356.5 110V118M356.5 126V133M356.5 157V165M356.5 173V188M356.5 220V228M356.5 275V283M358.5 204V212M358.5 322V330M359.5 86V94M359.5 243V251M359.5 291V298"/><path stroke="#6e6eff" d="M142.5 267V275M144.5 71V78M145.5 94V102M145.5 110V118M145.5 133V149M145.5 173V181M145.5 212V228M145.5 283V291M147.5 133V141M147.5 157V165M147.5 212V220M147.5 228V236M147.5 259V267M147.5 283V291M147.5 314V322M147.5 330V338M148.5 188V196M148.5 220V228M149.5 78V86M149.5 102V110M149.5 126V133M149.5 259V267M149.5 291V298M150.5 173V181M150.5 243V259M150.5 267V275M150.5 314V322M151.5 78V110M151.5 118V173M151.5 188V196M151.5 212V220M151.5 236V251M151.5 259V345M152.5 71V94M152.5 118V126M152.5 133V141M152.5 157V165M152.5 173V181M152.5 188V212M152.5 220V243M152.5 251V259M152.5 267V275M152.5 283V291M152.5 298V306M152.5 314V330M152.5 338V345M153.5 291V298M248.5 133V141M250.5 86V94M250.5 102V110M250.5 126V133M250.5 141V149M250.5 259V275M250.5 314V322M251.5 314V322M253.5 110V118M253.5 133V157M253.5 220V228M253.5 236V243M253.5 251V259M253.5 306V314M253.5 338V345M254.5 102V110M254.5 141V149M255.5 149V165M255.5 259V267M255.5 275V283M255.5 291V298M255.5 322V330M256.5 149V157M256.5 275V283M256.5 291V298M257.5 78V86M257.5 102V118M257.5 141V157M257.5 165V181M257.5 188V212M257.5 220V228M257.5 236V251M257.5 291V306M257.5 314V322M258.5 78V86M258.5 94V110M258.5 141V157M258.5 165V181M258.5 188V212M258.5 220V251M258.5 259V267M258.5 291V306M258.5 314V322M258.5 338V345M259.5 118V126M259.5 133V141M259.5 165V173M259.5 181V196M259.5 228V236M259.5 243V251M259.5 259V267M259.5 283V306M259.5 314V322M259.5 330V338M260.5 102V110M260.5 118V126M260.5 165V173M260.5 181V188M260.5 259V267M260.5 275V283M260.5 291V298M260.5 306V330M261.5 78V133M261.5 141V212M261.5 220V267M261.5 275V283M261.5 298V330M262.5 71V78M262.5 110V133M262.5 141V157M262.5 165V173M262.5 188V196M262.5 220V228M262.5 243V251M262.5 259V267M262.5 275V291M262.5 322V330M262.5 338V345M265.5 78V86M265.5 141V149M265.5 165V173M265.5 196V204M265.5 220V236M265.5 243V251M265.5 298V322M265.5 338V345M266.5 78V86M266.5 102V110M266.5 133V149M273.5 71V78M273.5 86V94M273.5 126V133M273.5 173V181M273.5 236V243M273.5 275V283M274.5 330V338M276.5 220V228M276.5 259V267M276.5 338V345M281.5 71V86M281.5 94V102M281.5 118V126M281.5 149V157M281.5 173V181M281.5 212V220M281.5 236V251M281.5 259V338M282.5 78V86M282.5 110V118M282.5 126V133M282.5 141V157M282.5 181V188M282.5 196V228M282.5 251V267M282.5 275V283M282.5 291V314M282.5 322V345M283.5 78V102M283.5 110V157M283.5 173V181M283.5 196V212M283.5 220V243M283.5 259V275M283.5 283V291M283.5 298V306M283.5 314V322M283.5 330V338M284.5 86V102M284.5 110V141M284.5 204V212M284.5 243V251M284.5 267V275M284.5 283V291M284.5 330V345M285.5 78V110M285.5 118V126M285.5 149V157M285.5 165V173M285.5 188V204M285.5 212V220M285.5 228V236M285.5 243V259M285.5 267V291M285.5 306V338M286.5 86V94M286.5 102V110M286.5 149V165M286.5 173V204M286.5 275V291M286.5 330V338M287.5 78V94M287.5 220V228M287.5 275V283M287.5 298V306M287.5 330V338M288.5 94V118M288.5 133V141M288.5 149V188M288.5 196V220M288.5 236V259M288.5 275V283M288.5 330V345M289.5 71V78M289.5 86V118M289.5 141V157M289.5 165V188M289.5 220V236M289.5 243V251M289.5 259V283M289.5 306V314M289.5 322V330M290.5 71V78M290.5 86V118M290.5 133V157M290.5 165V188M290.5 220V236M290.5 243V251M290.5 259V283M290.5 306V314M290.5 322V330M291.5 94V102M291.5 110V133M291.5 141V149M291.5 165V188M291.5 196V220M291.5 236V243M291.5 259V267M291.5 283V291M291.5 298V314M291.5 322V330M291.5 338V345M292.5 86V102M292.5 110V133M292.5 141V149M292.5 165V188M292.5 196V220M292.5 236V243M292.5 259V267M292.5 283V291M292.5 298V330M292.5 338V345M293.5 71V86M293.5 94V102M293.5 133V181M293.5 196V204M293.5 212V236M293.5 251V259M293.5 267V275M293.5 291V322M293.5 330V338M294.5 86V94M294.5 110V133M294.5 196V204M294.5 220V251M294.5 259V275M294.5 283V291M294.5 322V330M296.5 86V94M296.5 157V173M296.5 188V196M296.5 212V220M296.5 251V259M296.5 291V306M296.5 322V330M297.5 165V188M297.5 236V251M297.5 259V267M297.5 291V298M297.5 306V314M298.5 71V126M298.5 141V196M298.5 204V220M298.5 236V251M298.5 275V306M298.5 338V345M299.5 71V102M299.5 110V118M299.5 133V141M299.5 149V165M299.5 173V204M299.5 212V220M299.5 228V236M299.5 243V251M299.5 259V267M299.5 275V283M299.5 291V322M299.5 330V345M300.5 149V157M300.5 259V267M301.5 78V86M301.5 110V118M301.5 173V181M301.5 228V236M301.5 243V251M301.5 291V298M301.5 322V330M303.5 71V78M303.5 102V110M303.5 126V133M303.5 141V157M303.5 173V181M303.5 188V204M303.5 212V243M303.5 275V291M303.5 306V338M304.5 71V78M304.5 102V110M304.5 141V149M304.5 188V204M304.5 212V220M304.5 236V243M304.5 314V322M305.5 196V204M308.5 338V345M309.5 181V188M309.5 196V204M309.5 243V251M311.5 71V86M311.5 110V118M311.5 141V157M311.5 173V181M311.5 188V196M311.5 204V228M311.5 236V283M311.5 291V306M311.5 322V345M312.5 71V94M312.5 110V133M312.5 141V165M312.5 173V196M312.5 204V228M312.5 251V259M312.5 267V283M312.5 291V306M312.5 322V338M314.5 283V291M314.5 330V338M315.5 133V141M316.5 133V141M317.5 102V110M317.5 141V149M317.5 157V165M317.5 181V188M317.5 196V204M317.5 228V236M317.5 243V259M317.5 267V275M317.5 283V291M317.5 306V314M317.5 338V345M318.5 196V204M318.5 243V251M319.5 102V110M320.5 133V141M320.5 165V173M321.5 71V102M321.5 110V118M321.5 141V149M321.5 157V196M321.5 204V212M321.5 220V236M321.5 243V283M321.5 291V306M321.5 314V330M321.5 338V345M322.5 126V133M322.5 157V173M322.5 188V196M322.5 204V212M322.5 228V243M322.5 251V259M322.5 298V322M323.5 157V165M323.5 188V196M323.5 220V228M323.5 259V267M324.5 149V157M324.5 228V236M325.5 78V86M325.5 94V102M325.5 118V126M325.5 298V306M326.5 228V236M326.5 259V267M327.5 71V86M327.5 102V118M327.5 157V165M327.5 173V181M327.5 188V196M327.5 212V220M327.5 243V259M327.5 275V291M327.5 338V345M328.5 173V181M328.5 243V251M329.5 78V86M329.5 126V133M329.5 188V204M329.5 236V243M329.5 283V291M329.5 330V338M330.5 149V157M330.5 236V243M331.5 157V173M331.5 291V298M333.5 71V78M333.5 86V102M333.5 236V243M333.5 267V275M334.5 330V338M335.5 243V251M338.5 102V110M338.5 173V181M339.5 78V86M339.5 110V126M339.5 133V157M339.5 243V259M339.5 283V291M339.5 306V314M342.5 212V220M342.5 330V338M343.5 102V110M344.5 102V110M345.5 220V236M347.5 188V196M347.5 306V314M348.5 126V133M348.5 188V196M348.5 212V220M348.5 330V338M350.5 71V86M350.5 220V228M350.5 243V251M350.5 298V306M350.5 322V330M351.5 71V86M351.5 94V102M351.5 118V126M351.5 165V173M351.5 188V196M351.5 228V236M351.5 251V259M351.5 291V298M351.5 322V330M352.5 94V102"/><path stroke="#8080ff" d="M113.5 71V78M113.5 102V126M113.5 133V149M113.5 157V165M113.5 173V196M113.5 204V220M113.5 228V243M113.5 267V275M113.5 291V298M113.5 330V345M151.5 71V78M151.5 173V181M151.5 220V236M151.5 251V259M152.5 94V118M152.5 126V133M152.5 141V157M152.5 165V173M152.5 212V220M152.5 243V251M152.5 275V283M152.5 291V298M152.5 330V338M153.5 71V94M153.5 102V110M153.5 149V157M153.5 165V188M153.5 196V291M153.5 306V330M153.5 338V345M235.5 141V149M235.5 188V196M235.5 236V243M235.5 251V259M236.5 110V118M236.5 188V196M236.5 236V243M236.5 330V338M239.5 291V298M241.5 78V86M241.5 102V118M241.5 149V157M241.5 165V173M241.5 181V188M241.5 196V212M241.5 220V228M241.5 236V251M241.5 267V275M241.5 283V291M241.5 298V314M243.5 94V110M243.5 149V157M243.5 204V212M243.5 275V283M243.5 330V338M244.5 102V110M244.5 149V157M244.5 275V283M247.5 110V118M247.5 133V141M248.5 78V86M248.5 110V126M248.5 141V149M248.5 157V165M248.5 212V220M248.5 259V275M248.5 291V298M249.5 78V86M249.5 259V267M249.5 306V330M249.5 338V345M250.5 78V86M250.5 94V102M250.5 110V126M250.5 133V141M250.5 157V165M250.5 181V188M250.5 204V220M250.5 251V259M250.5 275V283M250.5 291V306M250.5 322V338M251.5 71V78M251.5 86V110M251.5 133V165M251.5 173V181M251.5 188V228M251.5 243V259M251.5 267V283M251.5 291V306M251.5 322V345M252.5 71V78M252.5 86V110M252.5 133V165M252.5 173V181M252.5 204V228M252.5 243V259M252.5 267V283M252.5 291V306M252.5 314V345M253.5 71V102M253.5 126V133M253.5 157V165M253.5 173V220M253.5 228V236M253.5 243V251M253.5 259V306M253.5 314V338M254.5 71V86M254.5 94V102M254.5 126V141M254.5 149V157M254.5 173V204M254.5 212V220M254.5 236V251M254.5 259V275M254.5 298V306M254.5 314V338M255.5 71V133M255.5 165V188M255.5 196V204M255.5 212V228M255.5 236V259M255.5 283V291M255.5 306V322M255.5 330V345M256.5 71V110M256.5 126V133M256.5 157V188M256.5 196V204M256.5 220V228M256.5 236V267M256.5 283V291M256.5 306V338M257.5 71V78M257.5 86V102M257.5 118V141M257.5 157V165M257.5 181V188M257.5 228V236M257.5 251V291M257.5 306V314M257.5 322V345M258.5 71V78M258.5 86V94M258.5 118V141M258.5 157V165M258.5 181V188M258.5 212V220M258.5 251V259M258.5 267V291M258.5 306V314M258.5 322V338M259.5 71V94M259.5 102V118M259.5 126V133M259.5 141V165M259.5 173V181M259.5 196V228M259.5 236V243M259.5 251V259M259.5 267V283M259.5 306V314M259.5 322V330M259.5 338V345M260.5 71V102M260.5 110V118M260.5 126V149M260.5 157V165M260.5 173V181M260.5 188V259M260.5 267V275M260.5 283V291M260.5 298V306M260.5 330V345M261.5 133V141M261.5 212V220M261.5 267V275M261.5 291V298M261.5 330V338M262.5 78V110M262.5 133V141M262.5 157V165M262.5 173V188M262.5 196V220M262.5 228V243M262.5 251V259M262.5 267V275M262.5 298V322M262.5 330V338M263.5 71V86M263.5 94V126M263.5 133V165M263.5 173V188M263.5 204V212M263.5 236V243M263.5 259V275M263.5 306V338M264.5 149V157M264.5 330V338M265.5 71V78M265.5 86V133M265.5 149V165M265.5 173V196M265.5 204V220M265.5 236V243M265.5 251V267M265.5 275V298M265.5 322V338M266.5 71V78M266.5 86V102M266.5 118V133M266.5 149V165M266.5 181V188M266.5 196V228M266.5 251V267M266.5 275V314M267.5 86V102M267.5 110V118M267.5 126V133M267.5 149V157M267.5 165V181M267.5 188V196M267.5 220V251M267.5 267V275M267.5 298V322M267.5 330V338M271.5 102V118M271.5 133V141M271.5 149V157M271.5 173V181M271.5 204V220M271.5 236V243M271.5 275V306M271.5 322V345M272.5 102V118M272.5 133V141M272.5 149V157M272.5 173V181M272.5 204V220M272.5 236V243M272.5 275V306M272.5 322V345M273.5 78V86M273.5 94V102M273.5 118V126M273.5 133V141M273.5 149V173M273.5 188V196M273.5 204V212M273.5 228V236M273.5 243V251M273.5 259V275M273.5 283V291M273.5 298V338M274.5 78V86M274.5 110V118M274.5 141V173M274.5 181V188M274.5 196V228M274.5 236V243M274.5 267V275M274.5 283V291M274.5 306V330M275.5 78V86M275.5 173V188M275.5 196V228M275.5 243V251M275.5 259V267M275.5 291V306M275.5 314V322M275.5 338V345M276.5 71V102M276.5 110V118M276.5 126V133M276.5 149V157M276.5 173V188M276.5 196V220M276.5 243V259M276.5 267V275M276.5 283V306M276.5 314V322M276.5 330V338M277.5 118V126M277.5 133V141M277.5 149V165M277.5 181V188M277.5 212V243M277.5 298V306M277.5 314V322M277.5 330V338M280.5 141V149M281.5 86V94M281.5 102V110M281.5 141V149M281.5 196V212M281.5 220V236M282.5 71V78M282.5 86V110M282.5 118V126M282.5 133V141M282.5 157V181M282.5 188V196M282.5 228V251M282.5 267V275M282.5 283V291M282.5 314V322M283.5 71V78M283.5 102V110M283.5 157V173M283.5 181V188M283.5 212V220M283.5 243V251M283.5 291V298M283.5 306V314M283.5 322V330M284.5 71V86M284.5 141V204M284.5 212V243M284.5 251V267M284.5 275V283M284.5 291V306M284.5 314V330M285.5 71V78M285.5 110V118M285.5 126V149M285.5 204V212M285.5 220V228M285.5 236V243M285.5 259V267M285.5 291V306M285.5 338V345M286.5 71V86M286.5 94V102M286.5 110V133M286.5 141V149M286.5 165V173M286.5 204V275M286.5 291V330M286.5 338V345M287.5 71V78M287.5 94V110M287.5 118V173M287.5 181V220M287.5 228V243M287.5 251V275M287.5 283V291M287.5 314V330M287.5 338V345M288.5 126V133M288.5 228V236M288.5 291V298M288.5 322V330M289.5 78V86M289.5 118V126M289.5 157V165M289.5 212V220M289.5 291V298M290.5 78V86M290.5 118V126M290.5 157V165M290.5 212V220M290.5 291V298M291.5 71V78M291.5 86V94M291.5 149V157M291.5 188V196M291.5 314V322M292.5 71V78M292.5 149V157M292.5 188V196M293.5 126V133M293.5 181V188M294.5 71V86M294.5 94V110M294.5 133V165M294.5 173V196M294.5 204V220M294.5 275V283M294.5 291V322M294.5 330V345M296.5 78V86M296.5 94V157M296.5 173V188M296.5 196V212M296.5 220V251M296.5 259V291M296.5 306V322M296.5 330V345M298.5 220V228M299.5 118V126M299.5 267V275M301.5 71V78M301.5 86V94M301.5 102V110M301.5 118V141M301.5 149V173M301.5 181V228M301.5 236V243M301.5 259V291M301.5 298V314M311.5 118V126M311.5 314V322M312.5 133V141M321.5 102V110M321.5 118V133M321.5 149V157M321.5 196V204M321.5 212V220M321.5 236V243M321.5 283V291M321.5 306V314M321.5 330V338M322.5 71V126M322.5 133V141M322.5 149V157M322.5 173V188M322.5 196V204M322.5 212V228M322.5 243V251M322.5 259V283M322.5 291V298M322.5 322V345M331.5 110V118M333.5 141V149M341.5 236V243"/><path stroke="#9090ff" d="M113.5 78V102M113.5 126V133M113.5 149V157M113.5 165V173M113.5 196V204M113.5 220V228M113.5 243V251M113.5 259V267M113.5 275V291M113.5 298V322M153.5 94V102M153.5 110V149M153.5 157V165M153.5 188V196M153.5 298V306M153.5 330V338M154.5 71V78M154.5 86V94M154.5 102V110M154.5 149V157M154.5 173V188M154.5 196V220M154.5 228V267M154.5 275V298M154.5 314V322M160.5 173V181M161.5 118V126M162.5 118V126M164.5 94V102M220.5 86V94M221.5 78V86M223.5 165V173M224.5 165V173M227.5 188V196M227.5 212V220M227.5 330V338M228.5 71V86M228.5 110V118M228.5 133V141M228.5 173V188M228.5 220V228M228.5 275V283M229.5 126V133M229.5 322V338M230.5 126V133M231.5 78V86M231.5 102V110M231.5 126V133M231.5 157V165M231.5 220V236M231.5 322V330M232.5 71V78M232.5 118V126M232.5 157V165M232.5 306V314M232.5 322V330M233.5 71V86M233.5 94V118M233.5 126V133M233.5 141V149M233.5 188V212M233.5 251V259M233.5 306V322M234.5 71V86M234.5 94V118M234.5 126V133M234.5 141V149M234.5 188V212M234.5 251V259M234.5 306V322M235.5 71V118M235.5 157V165M235.5 181V188M235.5 196V236M235.5 259V275M235.5 283V291M235.5 306V314M235.5 338V345M236.5 71V94M236.5 102V110M236.5 141V165M236.5 173V188M236.5 196V204M236.5 212V228M236.5 243V314M236.5 322V330M237.5 71V78M237.5 102V141M237.5 173V181M237.5 188V196M237.5 243V251M237.5 267V291M237.5 306V322M237.5 338V345M238.5 118V126M238.5 133V141M238.5 173V181M238.5 267V275M238.5 306V322M239.5 86V94M239.5 102V110M239.5 141V149M239.5 173V181M239.5 243V267M239.5 314V322M239.5 338V345M240.5 126V133M240.5 165V173M240.5 212V228M240.5 236V243M240.5 275V291M240.5 306V314M241.5 71V78M241.5 86V102M241.5 118V149M241.5 157V165M241.5 173V181M241.5 228V236M241.5 251V267M241.5 275V283M241.5 291V298M241.5 314V338M242.5 71V86M242.5 110V118M242.5 141V157M242.5 165V181M242.5 188V204M242.5 228V236M242.5 251V267M242.5 275V291M242.5 298V314M242.5 330V345M243.5 71V94M243.5 118V126M243.5 133V149M243.5 157V204M243.5 212V228M243.5 243V275M243.5 291V322M243.5 338V345M244.5 71V78M244.5 94V102M244.5 118V126M244.5 133V149M244.5 157V228M244.5 243V251M244.5 259V275M244.5 291V322M244.5 330V338M245.5 236V243M245.5 251V259M245.5 283V291M246.5 236V243M246.5 251V259M246.5 283V291M247.5 78V94M247.5 118V133M247.5 141V165M247.5 181V196M247.5 204V275M247.5 283V314M247.5 322V330M247.5 338V345M248.5 71V78M248.5 86V110M248.5 126V133M248.5 149V157M248.5 165V212M248.5 220V259M248.5 275V291M248.5 298V345M249.5 71V78M249.5 86V94M249.5 102V110M249.5 118V149M249.5 157V212M249.5 220V236M249.5 243V259M249.5 275V306M249.5 330V338M250.5 71V78M250.5 149V157M250.5 165V181M250.5 188V204M250.5 220V251M250.5 283V291M250.5 306V314M250.5 338V345M251.5 78V86M251.5 118V133M251.5 165V173M251.5 181V188M251.5 228V243M251.5 259V267M251.5 283V291M251.5 306V314M252.5 78V86M252.5 118V133M252.5 165V173M252.5 181V204M252.5 228V243M252.5 259V267M252.5 283V291M252.5 306V314M253.5 102V110M253.5 118V126M253.5 165V173M254.5 86V94M254.5 110V126M254.5 157V173M254.5 204V212M254.5 220V236M254.5 251V259M254.5 275V298M254.5 306V314M254.5 338V345M255.5 133V149M255.5 188V196M255.5 204V212M255.5 228V236M255.5 267V275M255.5 298V306M256.5 110V126M256.5 133V149M256.5 188V196M256.5 204V220M256.5 228V236M256.5 267V275M256.5 298V306M256.5 338V345M257.5 212V220M259.5 94V102M260.5 149V157M262.5 291V298M263.5 86V94M263.5 196V204M263.5 212V236M263.5 243V259M263.5 275V306M263.5 338V345M264.5 71V126M264.5 133V149M264.5 157V165M264.5 173V188M264.5 204V220M264.5 236V243M264.5 259V283M264.5 298V330M264.5 338V345M265.5 133V141M265.5 267V275M266.5 110V118M266.5 165V181M266.5 188V196M266.5 228V251M266.5 267V275M266.5 314V345M267.5 71V86M267.5 102V110M267.5 118V126M267.5 133V149M267.5 157V165M267.5 181V188M267.5 196V220M267.5 251V267M267.5 275V298M267.5 338V345M271.5 71V102M271.5 118V133M271.5 141V149M271.5 157V173M271.5 181V204M271.5 220V236M271.5 243V275M271.5 306V322M272.5 71V102M272.5 118V133M272.5 141V149M272.5 157V173M272.5 181V204M272.5 220V236M272.5 243V275M272.5 306V322M273.5 102V118M273.5 141V149M273.5 181V188M273.5 196V204M273.5 212V228M273.5 251V259M273.5 291V298M273.5 338V345M274.5 71V78M274.5 86V110M274.5 118V141M274.5 173V181M274.5 188V196M274.5 228V236M274.5 251V267M274.5 275V283M274.5 291V306M274.5 338V345M275.5 71V78M275.5 86V173M275.5 228V243M275.5 251V259M275.5 267V291M275.5 330V338M276.5 102V110M276.5 118V126M276.5 133V149M276.5 157V173M276.5 188V196M276.5 228V243M276.5 275V283M276.5 306V314M276.5 322V330M277.5 71V78M277.5 86V118M277.5 126V133M277.5 141V149M277.5 165V181M277.5 188V212M277.5 243V259M277.5 267V291M277.5 306V314M277.5 322V330M277.5 338V345M280.5 78V86M280.5 94V102M280.5 110V118M280.5 133V141M280.5 157V165M280.5 173V188M280.5 228V251M280.5 259V267M280.5 283V306M280.5 314V322M280.5 330V338M284.5 102V110M284.5 306V314M286.5 133V141M287.5 110V118M287.5 173V181M287.5 243V251M287.5 291V298M287.5 306V314M294.5 165V173M294.5 251V259M296.5 71V78M301.5 94V102M301.5 141V149M301.5 251V259M301.5 314V322M301.5 330V345M302.5 78V86M302.5 228V236M302.5 243V251M302.5 291V298M302.5 322V330M322.5 141V149M322.5 283V291M340.5 71V78M340.5 86V102M340.5 110V118M340.5 126V149M340.5 181V188M340.5 196V204M340.5 212V220M340.5 228V243M340.5 259V267M340.5 283V330M341.5 71V86M341.5 94V102M341.5 110V118M341.5 149V157M341.5 181V188M341.5 204V228M341.5 259V267M341.5 275V291M341.5 306V314M341.5 330V345"/><path stroke="#a2a2ff" d="M113.5 251V259M113.5 322V330M154.5 78V86M154.5 94V102M154.5 110V149M154.5 157V173M154.5 188V196M154.5 220V228M154.5 267V275M154.5 306V314M154.5 322V345M160.5 133V141M161.5 78V86M161.5 94V118M161.5 141V149M161.5 228V236M161.5 243V251M161.5 291V298M162.5 71V78M162.5 110V118M162.5 126V133M162.5 165V173M162.5 243V251M162.5 259V267M162.5 283V291M162.5 314V322M163.5 94V102M164.5 86V94M164.5 102V110M164.5 118V126M164.5 133V141M164.5 149V157M164.5 165V173M164.5 181V196M164.5 212V228M164.5 243V251M164.5 283V298M164.5 314V338M165.5 78V86M165.5 94V102M165.5 110V118M165.5 157V165M165.5 196V204M165.5 228V236M165.5 267V275M165.5 314V322M166.5 110V118M166.5 204V212M194.5 78V86M194.5 94V110M213.5 126V133M216.5 228V236M220.5 78V86M220.5 149V157M220.5 212V220M220.5 259V267M220.5 298V306M221.5 71V78M221.5 110V126M221.5 220V228M221.5 236V243M221.5 251V259M221.5 267V283M222.5 71V78M222.5 133V141M222.5 243V251M222.5 338V345M223.5 94V102M223.5 157V165M223.5 188V196M223.5 251V259M223.5 275V283M223.5 291V298M223.5 338V345M224.5 86V102M224.5 157V165M224.5 188V196M224.5 212V220M224.5 251V259M224.5 275V283M224.5 291V298M224.5 338V345M225.5 157V165M226.5 157V165M226.5 220V228M226.5 298V306M227.5 86V94M227.5 118V133M227.5 149V157M227.5 220V228M227.5 236V251M227.5 275V306M227.5 338V345M228.5 86V102M228.5 126V133M228.5 141V157M228.5 165V173M228.5 188V220M228.5 228V243M228.5 259V275M228.5 283V298M228.5 314V338M229.5 78V126M229.5 133V196M229.5 204V236M229.5 243V251M229.5 259V267M229.5 283V314M229.5 338V345M230.5 86V118M230.5 141V149M230.5 157V196M230.5 204V236M230.5 243V251M230.5 283V314M230.5 322V338M231.5 71V78M231.5 86V94M231.5 118V126M231.5 133V149M231.5 165V220M231.5 243V291M231.5 298V306M231.5 330V345M232.5 86V110M232.5 126V133M232.5 141V149M232.5 173V181M232.5 188V259M232.5 275V283M232.5 291V306M232.5 330V345M233.5 86V94M233.5 118V126M233.5 133V141M233.5 149V188M233.5 212V220M233.5 243V251M233.5 267V306M233.5 330V345M234.5 86V94M234.5 118V126M234.5 133V141M234.5 149V188M234.5 212V220M234.5 243V251M234.5 267V306M234.5 330V345M235.5 133V141M235.5 149V157M235.5 165V181M235.5 243V251M235.5 275V283M235.5 291V298M235.5 314V322M235.5 330V338M236.5 94V102M236.5 118V141M236.5 165V173M236.5 204V212M236.5 228V236M236.5 314V322M236.5 338V345M237.5 78V102M237.5 141V173M237.5 181V188M237.5 196V243M237.5 251V267M237.5 291V306M237.5 322V338M238.5 71V118M238.5 126V133M238.5 149V173M238.5 181V267M238.5 275V306M238.5 322V345M239.5 71V86M239.5 94V102M239.5 110V141M239.5 149V173M239.5 181V220M239.5 228V243M239.5 275V291M239.5 298V306M239.5 322V338M240.5 71V86M240.5 94V126M240.5 133V141M240.5 149V165M240.5 173V181M240.5 188V196M240.5 204V212M240.5 228V236M240.5 243V267M240.5 314V338M241.5 188V196M241.5 212V220M241.5 338V345M242.5 86V110M242.5 118V141M242.5 157V165M242.5 181V188M242.5 204V220M242.5 236V251M242.5 267V275M242.5 291V298M242.5 314V322M243.5 110V118M243.5 126V133M243.5 236V243M243.5 283V291M243.5 322V330M244.5 78V94M244.5 110V118M244.5 126V133M244.5 236V243M244.5 251V259M244.5 283V291M244.5 322V330M244.5 338V345M245.5 78V181M245.5 188V204M245.5 220V236M245.5 243V251M245.5 259V283M245.5 291V306M245.5 314V322M245.5 330V345M246.5 78V181M246.5 188V204M246.5 220V236M246.5 243V251M246.5 259V283M246.5 291V322M246.5 330V345M247.5 71V78M247.5 94V110M247.5 165V181M247.5 196V204M247.5 275V283M247.5 314V322M247.5 330V338M249.5 94V102M249.5 110V118M249.5 149V157M249.5 212V220M249.5 236V243M249.5 267V275M251.5 110V118M252.5 110V118M263.5 126V133M263.5 165V173M263.5 188V196M264.5 126V133M264.5 165V173M264.5 188V204M264.5 220V236M264.5 243V259M264.5 283V298M267.5 322V330M270.5 94V102M270.5 141V149M270.5 212V220M270.5 228V243M270.5 259V267M270.5 283V291M270.5 306V314M270.5 330V345M274.5 243V251M275.5 188V196M275.5 306V314M275.5 322V330M277.5 78V86M277.5 259V267M277.5 291V298M280.5 71V78M280.5 118V126M280.5 149V157M280.5 188V196M280.5 204V212M280.5 220V228M280.5 251V259M280.5 275V283M280.5 306V314M280.5 322V330M280.5 338V345M295.5 86V94M295.5 110V126M295.5 157V173M295.5 188V196M295.5 212V220M295.5 236V243M295.5 251V267M295.5 291V306M295.5 322V330M295.5 338V345M302.5 71V78M302.5 86V94M302.5 102V126M302.5 133V141M302.5 149V157M302.5 165V228M302.5 236V243M302.5 259V291M302.5 298V314M340.5 78V86M340.5 102V110M340.5 118V126M340.5 149V181M340.5 188V196M340.5 204V212M340.5 220V228M340.5 243V259M340.5 267V283M340.5 330V345M341.5 86V94M341.5 102V110M341.5 118V149M341.5 165V181M341.5 188V204M341.5 243V259M341.5 267V275M341.5 291V306M341.5 314V330"/><path stroke="#b2b2ff" d="M154.5 298V306M159.5 71V78M159.5 86V94M159.5 110V118M159.5 141V149M159.5 188V196M159.5 212V220M159.5 236V243M159.5 291V298M160.5 71V86M160.5 94V118M160.5 126V133M160.5 141V173M160.5 188V204M160.5 212V236M160.5 243V259M160.5 267V298M160.5 306V314M160.5 322V330M160.5 338V345M161.5 71V78M161.5 86V94M161.5 126V141M161.5 149V228M161.5 236V243M161.5 251V259M161.5 267V291M161.5 298V322M161.5 338V345M162.5 86V102M162.5 133V165M162.5 188V196M162.5 204V243M162.5 251V259M162.5 267V275M162.5 291V306M162.5 322V338M163.5 86V94M163.5 102V110M163.5 118V126M163.5 133V141M163.5 149V157M163.5 165V173M163.5 181V196M163.5 212V228M163.5 243V251M163.5 283V298M163.5 314V338M164.5 71V86M164.5 141V149M164.5 157V165M164.5 173V181M164.5 196V212M164.5 228V243M164.5 251V267M164.5 275V283M164.5 298V314M164.5 338V345M165.5 71V78M165.5 86V94M165.5 102V110M165.5 118V157M165.5 165V196M165.5 204V228M165.5 236V251M165.5 291V298M165.5 306V314M165.5 322V330M166.5 71V94M166.5 102V110M166.5 118V133M166.5 165V204M166.5 220V236M166.5 259V275M166.5 283V291M167.5 78V86M167.5 126V133M189.5 78V86M189.5 118V126M191.5 71V78M191.5 110V118M191.5 126V141M194.5 71V78M194.5 86V94M194.5 110V118M194.5 165V181M194.5 228V236M194.5 259V267M195.5 78V102M195.5 110V118M195.5 149V157M195.5 173V181M196.5 102V110M196.5 141V149M200.5 78V86M206.5 71V78M206.5 126V133M207.5 86V94M207.5 157V165M208.5 188V196M208.5 204V212M208.5 220V228M210.5 133V141M211.5 102V118M211.5 126V133M211.5 165V181M211.5 188V204M211.5 228V236M212.5 86V102M212.5 173V188M212.5 220V228M212.5 236V267M212.5 314V330M213.5 133V141M213.5 181V188M213.5 196V204M213.5 283V291M216.5 78V86M216.5 118V126M216.5 141V149M216.5 173V181M216.5 188V212M216.5 251V267M216.5 291V298M216.5 322V338M219.5 78V94M219.5 212V220M220.5 71V78M220.5 110V149M220.5 165V196M220.5 204V212M220.5 220V259M220.5 267V275M220.5 283V291M220.5 306V330M220.5 338V345M221.5 86V110M221.5 126V165M221.5 173V196M221.5 204V212M221.5 228V236M221.5 243V251M221.5 259V267M221.5 283V345M222.5 78V118M222.5 126V133M222.5 141V149M222.5 157V165M222.5 181V188M222.5 228V243M222.5 267V306M222.5 330V338M223.5 71V78M223.5 86V94M223.5 102V118M223.5 126V133M223.5 149V157M223.5 173V181M223.5 196V236M223.5 259V275M223.5 322V338M224.5 71V78M224.5 102V118M224.5 126V133M224.5 149V157M224.5 173V181M224.5 196V212M224.5 220V243M224.5 259V275M224.5 322V338M225.5 71V78M225.5 94V110M225.5 141V149M225.5 173V188M225.5 204V212M225.5 220V236M225.5 291V306M225.5 330V338M226.5 71V78M226.5 94V118M226.5 126V133M226.5 141V149M226.5 173V188M226.5 204V220M226.5 228V243M226.5 267V275M226.5 291V298M226.5 306V314M226.5 330V338M227.5 71V78M227.5 94V118M227.5 133V149M227.5 157V188M227.5 204V212M227.5 228V236M227.5 251V275M227.5 306V322M228.5 102V110M228.5 118V126M228.5 157V165M228.5 243V259M228.5 298V314M228.5 338V345M229.5 71V78M229.5 196V204M229.5 236V243M229.5 251V259M229.5 275V283M229.5 314V322M230.5 71V86M230.5 118V126M230.5 133V141M230.5 149V157M230.5 196V204M230.5 236V243M230.5 251V267M230.5 275V283M230.5 314V322M230.5 338V345M231.5 94V102M231.5 110V118M231.5 149V157M231.5 236V243M231.5 291V298M231.5 306V322M232.5 78V86M232.5 110V118M232.5 133V141M232.5 149V157M232.5 165V173M232.5 181V188M232.5 259V275M232.5 283V291M232.5 314V322M233.5 220V243M233.5 259V267M233.5 322V330M234.5 220V243M234.5 259V267M234.5 322V330M235.5 118V133M235.5 298V306M235.5 322V330M238.5 141V149M239.5 220V228M239.5 267V275M239.5 306V314M240.5 86V94M240.5 141V149M240.5 181V188M240.5 196V204M240.5 267V275M240.5 291V306M240.5 338V345M242.5 220V228M242.5 322V330M243.5 228V236M244.5 228V236M245.5 71V78M245.5 181V188M245.5 204V220M245.5 306V314M245.5 322V330M246.5 71V78M246.5 181V188M246.5 204V220M246.5 322V330M270.5 71V86M270.5 102V118M270.5 126V141M270.5 149V196M270.5 204V212M270.5 243V259M270.5 275V283M270.5 291V306M270.5 314V330M280.5 86V94M280.5 102V110M280.5 126V133M280.5 165V173M280.5 196V204M280.5 212V220M280.5 267V275M295.5 71V86M295.5 94V110M295.5 126V157M295.5 173V188M295.5 196V212M295.5 220V236M295.5 243V251M295.5 267V291M295.5 306V322M295.5 330V338M302.5 94V102M302.5 126V133M302.5 141V149M302.5 157V165M302.5 251V259M302.5 314V322M302.5 330V345M341.5 157V165M341.5 228V236"/><path stroke="#c4c4ff" d="M159.5 78V86M159.5 94V102M159.5 118V141M159.5 149V181M159.5 228V236M159.5 259V291M159.5 314V345M160.5 86V94M160.5 118V126M160.5 181V188M160.5 204V212M160.5 236V243M160.5 298V306M160.5 314V322M160.5 330V338M161.5 259V267M161.5 322V338M162.5 78V86M162.5 102V110M162.5 173V188M162.5 196V204M162.5 275V283M162.5 306V314M163.5 71V86M163.5 141V149M163.5 157V165M163.5 173V181M163.5 196V212M163.5 228V243M163.5 251V267M163.5 275V283M163.5 298V314M163.5 338V345M164.5 110V118M164.5 126V133M164.5 267V275M165.5 251V267M165.5 275V291M165.5 298V306M165.5 330V345M166.5 94V102M166.5 133V165M166.5 212V220M166.5 236V259M166.5 291V314M166.5 330V338M167.5 94V102M167.5 133V157M167.5 165V173M167.5 188V196M167.5 259V267M187.5 78V86M187.5 102V110M187.5 133V141M188.5 78V86M188.5 94V110M188.5 133V141M188.5 212V220M189.5 71V78M189.5 86V102M189.5 110V118M190.5 71V86M190.5 110V118M190.5 181V188M190.5 204V212M191.5 78V110M191.5 118V126M191.5 141V157M191.5 165V173M191.5 188V196M191.5 220V228M191.5 243V251M192.5 110V118M192.5 126V133M193.5 78V86M193.5 102V110M193.5 118V126M193.5 133V141M194.5 118V157M194.5 181V188M194.5 196V212M194.5 220V228M194.5 236V243M194.5 251V259M194.5 267V275M194.5 291V298M194.5 306V314M195.5 71V78M195.5 102V110M195.5 118V133M195.5 141V149M195.5 157V173M195.5 188V220M195.5 228V243M195.5 259V267M195.5 298V306M195.5 330V338M196.5 110V141M196.5 157V181M196.5 188V204M196.5 236V243M196.5 259V267M196.5 306V314M197.5 86V94M197.5 110V126M197.5 196V204M198.5 86V94M198.5 102V118M198.5 126V133M198.5 149V157M198.5 204V212M199.5 78V86M199.5 133V141M200.5 110V118M200.5 133V157M200.5 181V188M200.5 204V212M200.5 275V291M200.5 298V306M201.5 86V94M201.5 181V196M201.5 220V228M202.5 78V102M202.5 181V196M202.5 220V228M202.5 314V322M203.5 94V102M203.5 126V133M204.5 78V86M204.5 188V196M206.5 78V86M206.5 94V118M206.5 149V165M206.5 173V188M206.5 196V204M206.5 212V236M206.5 251V259M206.5 291V298M206.5 306V314M207.5 126V133M207.5 204V212M207.5 220V236M207.5 251V267M207.5 283V291M207.5 298V306M208.5 86V94M208.5 102V110M208.5 118V126M208.5 133V141M208.5 165V181M208.5 196V204M208.5 243V251M208.5 275V291M208.5 298V306M208.5 314V338M209.5 133V141M209.5 149V157M209.5 181V196M209.5 204V212M209.5 220V228M209.5 291V306M210.5 71V78M210.5 86V102M210.5 149V157M210.5 181V212M210.5 220V228M210.5 243V267M210.5 283V314M210.5 322V330M211.5 78V102M211.5 118V126M211.5 133V141M211.5 157V165M211.5 220V228M211.5 236V243M211.5 251V283M211.5 291V306M211.5 322V330M211.5 338V345M212.5 71V86M212.5 102V126M212.5 133V141M212.5 157V165M212.5 188V212M212.5 228V236M212.5 267V275M212.5 291V298M212.5 306V314M212.5 330V338M213.5 71V86M213.5 110V126M213.5 165V173M213.5 188V196M213.5 204V212M213.5 228V243M213.5 267V275M213.5 291V306M216.5 71V78M216.5 86V110M216.5 126V133M216.5 149V157M216.5 165V173M216.5 181V188M216.5 212V228M216.5 236V251M216.5 267V275M216.5 298V322M216.5 338V345M217.5 314V322M219.5 126V133M219.5 149V157M219.5 165V173M219.5 188V196M219.5 204V212M219.5 243V275M219.5 283V291M219.5 298V306M219.5 314V322M219.5 338V345M220.5 94V110M220.5 157V165M220.5 196V204M220.5 275V283M220.5 291V298M220.5 330V338M221.5 165V173M221.5 196V204M221.5 212V220M222.5 149V157M222.5 165V181M222.5 188V228M222.5 251V267M222.5 306V330M223.5 118V126M223.5 133V141M223.5 181V188M223.5 236V251M223.5 283V291M223.5 298V314M224.5 78V86M224.5 118V126M224.5 133V149M224.5 181V188M224.5 243V251M224.5 283V291M224.5 298V322M225.5 78V86M225.5 110V141M225.5 149V157M225.5 165V173M225.5 188V204M225.5 212V220M225.5 236V243M225.5 251V259M225.5 267V283M225.5 306V330M225.5 338V345M226.5 78V94M226.5 118V126M226.5 133V141M226.5 149V157M226.5 165V173M226.5 188V204M226.5 243V259M226.5 275V283M226.5 314V330M226.5 338V345M227.5 78V86M227.5 196V204M227.5 322V330M229.5 267V275M230.5 267V275M268.5 86V94M268.5 165V173M268.5 188V196M268.5 236V243M268.5 298V306M270.5 86V94M270.5 118V126M270.5 196V204M270.5 220V228M270.5 267V275M278.5 118V126M278.5 133V141M278.5 149V157M278.5 181V188M278.5 212V243M278.5 298V306M278.5 314V322M278.5 330V338"/><path stroke="#d4d4ff" d="M159.5 102V110M159.5 181V188M159.5 196V212M159.5 220V228M159.5 243V259M159.5 306V314M160.5 259V267M162.5 338V345M163.5 110V118M163.5 126V133M163.5 267V275M166.5 275V283M166.5 314V330M166.5 338V345M167.5 71V78M167.5 86V94M167.5 102V126M167.5 173V188M167.5 196V259M167.5 267V283M167.5 330V338M168.5 94V102M168.5 165V173M170.5 78V94M170.5 220V236M179.5 71V78M179.5 118V126M181.5 86V94M181.5 110V133M182.5 71V78M182.5 141V149M183.5 71V86M183.5 157V165M183.5 173V181M185.5 71V78M185.5 94V102M185.5 126V141M187.5 94V102M187.5 118V126M187.5 165V173M187.5 181V188M187.5 212V220M188.5 71V78M188.5 110V133M188.5 141V188M188.5 196V204M188.5 220V228M189.5 102V110M189.5 133V188M189.5 196V204M189.5 220V228M189.5 236V243M190.5 86V94M190.5 126V141M190.5 149V165M190.5 173V181M190.5 236V243M191.5 157V165M191.5 173V188M191.5 196V220M191.5 228V243M191.5 251V275M191.5 298V314M191.5 330V345M192.5 71V110M192.5 118V126M192.5 133V157M192.5 165V173M192.5 188V196M192.5 220V228M192.5 243V251M193.5 71V78M193.5 86V102M193.5 126V133M193.5 141V149M193.5 165V181M193.5 204V212M193.5 220V228M193.5 243V251M194.5 157V165M194.5 188V196M194.5 212V220M194.5 243V251M194.5 283V291M194.5 298V306M194.5 314V345M195.5 133V141M195.5 181V188M195.5 220V228M195.5 251V259M195.5 267V275M195.5 283V298M195.5 306V322M196.5 71V102M196.5 149V157M196.5 181V188M196.5 204V236M196.5 243V251M196.5 291V298M196.5 322V330M197.5 71V86M197.5 94V110M197.5 126V133M197.5 141V157M197.5 165V196M198.5 71V86M198.5 94V102M198.5 118V126M198.5 133V141M198.5 157V165M198.5 173V181M198.5 196V204M198.5 212V220M198.5 236V251M198.5 267V291M198.5 298V306M198.5 314V322M199.5 94V118M199.5 126V133M199.5 141V157M199.5 181V188M199.5 204V212M199.5 228V236M199.5 275V291M199.5 298V306M200.5 71V78M200.5 94V110M200.5 118V133M200.5 165V173M200.5 188V204M200.5 212V220M200.5 228V251M200.5 267V275M200.5 306V322M201.5 71V86M201.5 94V102M201.5 110V118M201.5 126V149M201.5 157V165M201.5 173V181M201.5 196V204M201.5 236V267M201.5 314V322M201.5 338V345M202.5 71V78M202.5 110V149M202.5 157V165M202.5 173V181M202.5 196V204M202.5 212V220M202.5 236V267M202.5 291V298M202.5 306V314M202.5 338V345M203.5 118V126M203.5 133V149M203.5 165V173M203.5 181V196M203.5 259V267M203.5 338V345M204.5 102V110M204.5 126V133M204.5 165V173M204.5 181V188M204.5 212V220M204.5 322V330M205.5 94V102M205.5 165V173M205.5 181V196M205.5 204V212M206.5 86V94M206.5 133V149M206.5 165V173M206.5 188V196M206.5 204V212M206.5 236V251M206.5 259V291M206.5 314V345M207.5 71V86M207.5 94V110M207.5 118V126M207.5 133V157M207.5 165V173M207.5 196V204M207.5 212V220M207.5 236V251M207.5 267V275M207.5 291V298M207.5 306V314M207.5 322V330M207.5 338V345M208.5 71V86M208.5 94V102M208.5 110V118M208.5 141V165M208.5 181V188M208.5 212V220M208.5 236V243M208.5 251V259M208.5 267V275M208.5 306V314M208.5 338V345M209.5 71V118M209.5 126V133M209.5 141V149M209.5 165V181M209.5 196V204M209.5 236V275M209.5 283V291M209.5 306V330M210.5 78V86M210.5 102V133M210.5 141V149M210.5 165V181M210.5 228V243M210.5 267V283M210.5 314V322M210.5 330V338M211.5 71V78M211.5 141V157M211.5 204V220M211.5 243V251M211.5 283V291M211.5 314V322M211.5 330V338M212.5 126V133M212.5 141V157M212.5 165V173M212.5 212V220M212.5 275V291M212.5 298V306M212.5 338V345M213.5 94V110M213.5 141V165M213.5 212V228M213.5 243V267M213.5 275V283M213.5 306V345M215.5 78V86M215.5 228V236M215.5 322V330M216.5 110V118M216.5 133V141M216.5 157V165M216.5 275V283M217.5 102V110M217.5 118V126M217.5 157V173M217.5 181V196M217.5 228V275M217.5 291V314M217.5 330V345M219.5 71V78M219.5 94V126M219.5 133V149M219.5 157V165M219.5 173V188M219.5 196V204M219.5 220V243M219.5 275V283M219.5 291V298M219.5 306V314M219.5 322V338M222.5 118V126M223.5 78V86M223.5 141V149M223.5 314V322M225.5 86V94M225.5 243V251M225.5 259V267M225.5 283V291M226.5 259V267M226.5 283V291M268.5 71V78M268.5 94V102M268.5 110V133M268.5 141V149M268.5 204V212M268.5 220V236M268.5 243V267M268.5 283V298M268.5 306V314M268.5 338V345M278.5 71V78M278.5 94V118M278.5 126V133M278.5 141V149M278.5 157V181M278.5 188V212M278.5 243V259M278.5 267V291M278.5 306V314M278.5 322V330M278.5 338V345M279.5 78V86M279.5 94V102M279.5 110V118M279.5 141V149M279.5 157V165M279.5 173V188M279.5 228V236M279.5 243V251M279.5 259V267M279.5 298V306"/><path stroke="#e6e6ff" d="M158.5 71V86M158.5 94V126M158.5 133V141M158.5 165V181M158.5 212V220M158.5 259V267M158.5 275V283M158.5 298V314M159.5 298V306M167.5 157V165M167.5 283V322M167.5 338V345M168.5 71V86M168.5 110V118M168.5 126V133M168.5 141V157M168.5 220V228M168.5 322V330M169.5 78V86M170.5 71V78M170.5 102V110M170.5 126V133M170.5 157V165M178.5 141V157M178.5 173V181M179.5 86V118M179.5 133V149M179.5 157V165M179.5 173V181M180.5 71V78M180.5 86V94M180.5 102V110M180.5 133V141M180.5 157V165M181.5 71V86M181.5 94V110M181.5 133V141M181.5 149V165M181.5 173V188M182.5 86V94M182.5 102V110M182.5 118V141M182.5 165V173M182.5 188V204M182.5 220V228M182.5 251V259M183.5 86V110M183.5 118V141M183.5 149V157M183.5 196V204M184.5 71V86M184.5 118V133M184.5 157V165M184.5 173V181M185.5 78V94M185.5 102V126M185.5 157V181M185.5 228V236M185.5 243V251M186.5 71V78M186.5 94V102M186.5 126V141M187.5 71V78M187.5 86V94M187.5 110V118M187.5 126V133M187.5 141V165M187.5 173V181M187.5 188V212M187.5 220V236M187.5 306V314M188.5 86V94M188.5 188V196M188.5 204V212M188.5 228V243M188.5 259V267M188.5 283V291M188.5 306V314M189.5 126V133M189.5 188V196M189.5 204V220M189.5 228V236M189.5 243V259M189.5 267V275M189.5 283V298M189.5 306V314M189.5 338V345M190.5 94V110M190.5 118V126M190.5 141V149M190.5 165V173M190.5 188V204M190.5 212V220M190.5 228V236M190.5 243V251M190.5 259V267M190.5 275V283M191.5 275V298M191.5 314V322M192.5 157V165M192.5 173V181M192.5 204V220M192.5 228V243M192.5 259V267M192.5 298V314M192.5 330V338M193.5 110V118M193.5 149V165M193.5 181V204M193.5 212V220M193.5 236V243M193.5 251V259M193.5 291V298M193.5 314V322M194.5 275V283M195.5 243V251M195.5 275V283M195.5 322V330M195.5 338V345M196.5 251V259M196.5 267V283M196.5 330V345M197.5 133V141M197.5 157V165M197.5 204V298M197.5 306V314M197.5 322V345M198.5 141V149M198.5 165V173M198.5 188V196M198.5 220V236M198.5 251V267M198.5 291V298M198.5 338V345M199.5 71V78M199.5 118V126M199.5 157V173M199.5 188V204M199.5 212V220M199.5 236V251M199.5 267V275M199.5 306V322M200.5 86V94M200.5 157V165M200.5 220V228M200.5 251V267M200.5 291V298M200.5 330V345M201.5 102V110M201.5 118V126M201.5 149V157M201.5 204V220M201.5 275V314M202.5 102V110M202.5 149V157M202.5 204V212M202.5 228V236M202.5 275V291M202.5 298V306M203.5 71V94M203.5 102V110M203.5 149V165M203.5 173V181M203.5 204V228M203.5 236V243M203.5 251V259M203.5 267V275M203.5 298V306M203.5 322V338M204.5 71V78M204.5 86V94M204.5 110V126M204.5 149V157M204.5 196V204M204.5 228V236M204.5 251V275M204.5 283V291M204.5 298V322M204.5 330V345M205.5 78V94M205.5 102V149M205.5 157V165M205.5 196V204M205.5 212V220M205.5 228V236M205.5 243V267M205.5 275V291M205.5 314V330M206.5 118V126M206.5 298V306M207.5 110V118M207.5 173V196M207.5 275V283M207.5 314V322M207.5 330V338M208.5 126V133M208.5 228V236M208.5 259V267M208.5 291V298M209.5 118V126M209.5 157V165M209.5 228V236M209.5 275V283M209.5 330V345M210.5 157V165M210.5 212V220M210.5 338V345M211.5 181V188M211.5 306V314M213.5 86V94M213.5 173V181M215.5 118V126M215.5 141V149M215.5 173V181M215.5 188V212M215.5 251V275M215.5 291V306M215.5 330V338M216.5 283V291M217.5 71V102M217.5 110V118M217.5 126V149M217.5 196V228M217.5 275V283M217.5 322V330M268.5 78V86M268.5 102V110M268.5 133V141M268.5 149V165M268.5 173V188M268.5 196V204M268.5 212V220M268.5 267V283M268.5 314V330M278.5 78V94M278.5 259V267M278.5 291V298M279.5 71V78M279.5 133V141M279.5 149V157M279.5 188V196M279.5 204V212M279.5 220V228M279.5 236V243M279.5 251V259M279.5 275V298M279.5 306V345"/><path stroke="#f6f6ff" d="M155.5 181V188M158.5 86V94M158.5 126V133M158.5 141V165M158.5 181V212M158.5 220V259M158.5 267V275M158.5 314V345M168.5 86V94M168.5 102V110M168.5 118V126M168.5 133V141M168.5 173V181M168.5 188V196M168.5 204V220M168.5 228V236M168.5 243V251M168.5 259V275M168.5 306V314M169.5 86V94M169.5 157V165M169.5 220V236M170.5 94V102M170.5 110V126M170.5 141V157M170.5 165V181M170.5 188V212M170.5 236V259M170.5 275V283M170.5 306V314M170.5 330V338M171.5 71V78M171.5 94V110M171.5 141V149M178.5 71V86M178.5 94V118M178.5 133V141M178.5 157V165M179.5 78V86M179.5 126V133M179.5 165V173M179.5 181V212M179.5 228V236M180.5 94V102M180.5 110V126M180.5 141V157M180.5 165V181M180.5 204V212M180.5 243V251M181.5 141V149M181.5 165V173M181.5 188V196M181.5 204V220M181.5 236V251M181.5 267V275M181.5 283V291M181.5 314V322M182.5 78V86M182.5 94V102M182.5 110V118M182.5 149V165M182.5 173V188M182.5 204V212M182.5 259V267M182.5 275V283M182.5 291V298M183.5 110V118M183.5 141V149M183.5 165V173M183.5 181V196M183.5 220V228M183.5 236V243M183.5 251V259M183.5 275V291M183.5 330V338M184.5 86V118M184.5 133V157M184.5 165V173M184.5 196V204M184.5 220V228M184.5 251V259M184.5 275V283M185.5 141V157M185.5 196V204M185.5 212V220M185.5 236V243M185.5 251V267M185.5 291V298M186.5 78V94M186.5 102V126M186.5 157V181M186.5 228V236M186.5 243V251M187.5 236V251M187.5 259V291M187.5 314V322M188.5 243V259M188.5 267V283M188.5 291V298M188.5 314V330M189.5 259V267M189.5 314V322M189.5 330V338M190.5 220V228M190.5 251V259M190.5 267V275M190.5 291V322M190.5 330V338M191.5 322V330M192.5 181V188M192.5 196V204M192.5 251V259M192.5 267V275M192.5 283V298M192.5 314V322M192.5 338V345M193.5 228V236M193.5 259V291M193.5 298V314M193.5 322V330M196.5 283V291M196.5 298V306M196.5 314V322M197.5 298V306M198.5 181V188M198.5 306V314M198.5 322V338M199.5 86V94M199.5 173V181M199.5 220V228M199.5 251V267M199.5 291V298M199.5 330V345M200.5 173V181M200.5 322V330M201.5 165V173M201.5 228V236M201.5 322V338M202.5 165V173M202.5 267V275M202.5 322V338M203.5 110V118M203.5 196V204M203.5 228V236M203.5 243V251M203.5 275V298M203.5 306V322M204.5 94V102M204.5 133V149M204.5 157V165M204.5 173V181M204.5 204V212M204.5 220V228M204.5 243V251M204.5 275V283M204.5 291V298M205.5 71V78M205.5 149V157M205.5 173V181M205.5 220V228M205.5 236V243M205.5 291V314M205.5 338V345M209.5 212V220M215.5 71V78M215.5 86V110M215.5 126V133M215.5 149V157M215.5 165V173M215.5 181V188M215.5 212V228M215.5 236V251M215.5 306V322M215.5 338V345M217.5 149V157M217.5 173V181M217.5 283V291M268.5 330V338M269.5 259V267M269.5 306V314M279.5 86V94M279.5 102V110M279.5 118V133M279.5 165V173M279.5 196V204M279.5 267V275"/><path stroke="#fff6f6" d="M155.5 71V86M155.5 110V118M155.5 188V196M155.5 204V212M155.5 228V236M155.5 283V291M157.5 102V110M158.5 283V298M167.5 322V330M168.5 157V165M168.5 181V188M168.5 196V204M168.5 236V243M168.5 251V259M168.5 275V298M168.5 330V338M169.5 71V78M169.5 94V110M169.5 126V133M169.5 149V157M169.5 204V212M169.5 306V314M170.5 133V141M170.5 181V188M170.5 212V220M170.5 259V275M170.5 283V306M170.5 314V322M171.5 78V94M171.5 110V118M171.5 133V141M171.5 149V165M171.5 173V204M171.5 251V259M173.5 118V133M173.5 149V157M173.5 181V188M173.5 196V204M173.5 251V259M173.5 291V314M173.5 322V330M178.5 86V94M178.5 118V133M178.5 204V212M178.5 243V259M178.5 291V298M179.5 149V157M179.5 212V228M179.5 236V243M179.5 251V259M179.5 291V298M180.5 78V86M180.5 126V133M180.5 181V204M180.5 228V243M180.5 259V267M180.5 314V322M181.5 196V204M181.5 220V228M181.5 251V267M181.5 275V283M181.5 291V306M181.5 322V345M182.5 212V220M182.5 228V251M182.5 267V275M182.5 283V291M182.5 306V314M182.5 330V338M183.5 204V220M183.5 228V236M183.5 243V251M183.5 259V275M183.5 291V314M183.5 322V330M184.5 181V196M184.5 212V220M184.5 228V251M184.5 283V291M184.5 330V338M185.5 181V196M185.5 204V212M185.5 220V228M185.5 275V291M185.5 298V322M185.5 330V338M186.5 141V157M186.5 196V204M186.5 212V220M186.5 236V243M186.5 251V267M186.5 291V298M187.5 251V259M187.5 291V306M187.5 322V345M188.5 298V306M188.5 330V345M189.5 275V283M189.5 298V306M189.5 322V330M190.5 283V291M190.5 322V330M190.5 338V345M192.5 275V283M192.5 322V330M193.5 330V345M197.5 314V322M199.5 322V330M201.5 267V275M204.5 236V243M205.5 267V275M205.5 330V338M215.5 110V118M215.5 133V141M215.5 157V165M215.5 275V291M269.5 71V78M269.5 118V126M269.5 196V204M269.5 228V236M269.5 243V251M269.5 267V275M269.5 314V322M279.5 212V220"/><path stroke="#ffe6e6" d="M155.5 86V102M155.5 118V126M155.5 133V165M155.5 173V181M155.5 212V228M155.5 236V243M155.5 251V259M155.5 267V283M155.5 291V298M155.5 306V314M155.5 322V338M168.5 298V306M168.5 314V322M168.5 338V345M169.5 110V126M169.5 141V149M169.5 165V181M169.5 188V204M169.5 236V259M169.5 275V283M169.5 330V338M170.5 322V330M170.5 338V345M171.5 118V133M171.5 165V173M171.5 204V212M171.5 220V228M171.5 243V251M171.5 259V267M171.5 283V291M171.5 314V322M172.5 94V102M172.5 141V149M173.5 78V102M173.5 110V118M173.5 141V149M173.5 165V181M173.5 188V196M173.5 204V212M173.5 220V251M173.5 259V291M173.5 314V322M177.5 71V78M177.5 94V102M177.5 149V157M177.5 165V173M177.5 228V243M177.5 267V275M177.5 306V322M178.5 165V173M178.5 181V188M178.5 212V228M178.5 236V243M178.5 259V267M178.5 298V306M178.5 330V345M179.5 259V291M179.5 298V345M180.5 212V228M180.5 251V259M180.5 267V314M180.5 322V345M181.5 228V236M182.5 298V306M182.5 322V330M182.5 338V345M183.5 314V322M184.5 204V212M184.5 259V275M184.5 291V314M184.5 322V330M185.5 267V275M185.5 322V330M186.5 181V196M186.5 204V212M186.5 220V228M186.5 275V291M186.5 298V322M186.5 330V338M214.5 126V133M269.5 78V110M269.5 126V133M269.5 141V157M269.5 165V196M269.5 212V228M269.5 236V243M269.5 251V259M269.5 298V306M269.5 330V345"/><path stroke="#ffd4d4" d="M155.5 102V110M155.5 126V133M155.5 165V173M155.5 196V204M155.5 243V251M155.5 259V267M155.5 298V306M155.5 314V322M155.5 338V345M157.5 71V86M157.5 94V102M157.5 118V126M157.5 149V157M157.5 181V196M157.5 220V228M157.5 283V291M157.5 306V314M169.5 133V141M169.5 181V188M169.5 212V220M169.5 259V275M169.5 283V306M169.5 314V322M171.5 212V220M171.5 228V243M171.5 275V283M171.5 291V298M171.5 330V338M172.5 102V110M172.5 181V188M173.5 71V78M173.5 133V141M173.5 157V165M173.5 212V220M173.5 330V338M177.5 86V94M177.5 102V126M177.5 204V220M177.5 243V251M177.5 283V291M177.5 298V306M177.5 330V338M178.5 188V204M178.5 267V291M178.5 306V330M179.5 243V251M181.5 306V314M182.5 314V322M183.5 338V345M184.5 314V322M184.5 338V345M185.5 338V345M186.5 267V275M186.5 322V330M214.5 71V78M214.5 118V126M214.5 133V141M214.5 181V204M214.5 228V243M214.5 267V275M214.5 283V306M269.5 110V118M269.5 157V165M269.5 204V212M269.5 275V298M269.5 322V330"/><path stroke="#ffc4c4" d="M157.5 110V118M157.5 133V149M157.5 157V181M157.5 196V220M157.5 236V251M157.5 259V283M157.5 298V306M157.5 322V330M157.5 338V345M169.5 322V330M169.5 338V345M171.5 267V275M171.5 298V314M171.5 338V345M172.5 71V94M172.5 110V141M172.5 149V181M172.5 196V220M172.5 259V267M172.5 283V291M172.5 298V306M173.5 102V110M173.5 338V345M176.5 228V236M177.5 78V86M177.5 126V149M177.5 157V165M177.5 173V188M177.5 196V204M177.5 220V228M177.5 251V267M177.5 275V283M177.5 291V298M186.5 338V345M214.5 78V86M214.5 94V102M214.5 110V118M214.5 141V149M214.5 157V173M214.5 204V212M214.5 243V267M214.5 306V345M218.5 314V322M269.5 133V141"/><path stroke="#ffb2b2" d="M157.5 86V94M157.5 126V133M157.5 228V236M157.5 251V259M157.5 291V298M157.5 330V338M171.5 322V330M172.5 188V196M172.5 228V243M172.5 251V259M172.5 267V283M172.5 291V298M172.5 306V322M176.5 102V110M176.5 188V196M176.5 212V220M176.5 236V243M176.5 267V275M176.5 314V322M176.5 338V345M177.5 188V196M177.5 322V330M177.5 338V345M178.5 228V236M214.5 102V110M214.5 149V157M214.5 173V181M214.5 212V228M214.5 275V283M218.5 102V110M218.5 118V126M218.5 157V173M218.5 188V196M218.5 228V251M218.5 259V275M218.5 291V306M218.5 330V345"/><path stroke="#ffa2a2" d="M157.5 314V322M172.5 220V228M172.5 322V345M176.5 86V94M176.5 133V141M176.5 149V157M176.5 173V181M176.5 196V204M176.5 220V228M176.5 275V283M214.5 86V94M218.5 71V102M218.5 110V118M218.5 126V149M218.5 181V188M218.5 196V228M218.5 251V259M218.5 275V283M218.5 306V314M218.5 322V330"/><path stroke="#ff9090" d="M172.5 243V251M174.5 330V338M176.5 71V78M176.5 94V102M176.5 110V133M176.5 141V149M176.5 157V165M176.5 181V188M176.5 204V212M176.5 259V267M176.5 291V306M176.5 322V338M218.5 149V157M218.5 173V181M218.5 283V291"/><path stroke="#ff8080" d="M174.5 78V86M174.5 126V133M176.5 78V86M176.5 165V173M176.5 243V259M176.5 283V291M176.5 306V314"/><path stroke="#ff6e6e" d="M174.5 94V102M174.5 188V196M174.5 322V330"/><path stroke="#ff5e5e" d="M174.5 86V94M174.5 102V110M174.5 118V126M174.5 298V306M174.5 338V345"/><path stroke="#ff4c4c" d="M174.5 133V141M174.5 149V157M174.5 165V181"/><path stroke="#ff3c3c" d="M174.5 110V118M174.5 283V298M174.5 314V322"/><path stroke="#ff2a2a" d="M174.5 157V165M174.5 196V204M174.5 306V314"/><path stroke="#ff1a1a" d="M174.5 71V78M174.5 141V149M174.5 181V188M174.5 204V283"/><path stroke="#ff0000" d="M156.5 78V94M156.5 102V118M156.5 126V157M156.5 173V196M156.5 204V243M156.5 251V283M156.5 298V314M156.5 322V345M175.5 71V133M175.5 141V345"/><path stroke="#ffffff" d="M156.5 71V78M156.5 94V102M156.5 118V126M156.5 157V173M156.5 196V204M156.5 243V251M156.5 283V298M156.5 314V322M175.5 133V141"/></g>
<rect x="74.5" y="70.5" width="286" height="275" fill="none" stroke="#000" stroke-width="1"/>
<path d="M69.5 74.50H74.5" stroke="#000" stroke-width="1.2"/>
<text x="64.3" y="78.10" font-size="11.3" text-anchor="end" fill="#000">35</text>
<path d="M69.5 113.78H74.5" stroke="#000" stroke-width="1.2"/>
<text x="64.3" y="117.38" font-size="11.3" text-anchor="end" fill="#000">30</text>
<path d="M69.5 153.07H74.5" stroke="#000" stroke-width="1.2"/>
<text x="64.3" y="156.67" font-size="11.3" text-anchor="end" fill="#000">25</text>
<path d="M69.5 192.35H74.5" stroke="#000" stroke-width="1.2"/>
<text x="64.3" y="195.95" font-size="11.3" text-anchor="end" fill="#000">20</text>
<path d="M69.5 231.64H74.5" stroke="#000" stroke-width="1.2"/>
<text x="64.3" y="235.24" font-size="11.3" text-anchor="end" fill="#000">15</text>
<path d="M69.5 270.92H74.5" stroke="#000" stroke-width="1.2"/>
<text x="64.3" y="274.52" font-size="11.3" text-anchor="end" fill="#000">10</text>
<path d="M69.5 310.21H74.5" stroke="#000" stroke-width="1.2"/>
<text x="64.3" y="313.81" font-size="11.3" text-anchor="end" fill="#000">5</text>
<path d="M96.40 345.5V350.5" stroke="#000" stroke-width="1.2"/>
<text transform="translate(100.40 353.9) rotate(-90)" font-size="11.3" text-anchor="end" fill="#000">10</text>
<path d="M140.40 345.5V350.5" stroke="#000" stroke-width="1.2"/>
<text transform="translate(144.40 353.9) rotate(-90)" font-size="11.3" text-anchor="end" fill="#000">20</text>
<path d="M184.40 345.5V350.5" stroke="#000" stroke-width="1.2"/>
<text transform="translate(188.40 353.9) rotate(-90)" font-size="11.3" text-anchor="end" fill="#000">30</text>
<path d="M228.40 345.5V350.5" stroke="#000" stroke-width="1.2"/>
<text transform="translate(232.40 353.9) rotate(-90)" font-size="11.3" text-anchor="end" fill="#000">40</text>
<path d="M272.40 345.5V350.5" stroke="#000" stroke-width="1.2"/>
<text transform="translate(276.40 353.9) rotate(-90)" font-size="11.3" text-anchor="end" fill="#000">50</text>
<path d="M316.40 345.5V350.5" stroke="#000" stroke-width="1.2"/>
<text transform="translate(320.40 353.9) rotate(-90)" font-size="11.3" text-anchor="end" fill="#000">60</text>
<path d="M360.40 345.5V350.5" stroke="#000" stroke-width="1.2"/>
<text transform="translate(364.40 353.9) rotate(-90)" font-size="11.3" text-anchor="end" fill="#000">70</text>
<text x="217.1" y="385.8" font-size="14" text-anchor="middle" fill="#000">2θ(degree)</text>
<text transform="translate(39.1 207.8) rotate(-90)" font-size="13.5" text-anchor="middle" fill="#000">Index</text>
<text x="334.1" y="63.2" font-size="14" fill="#000">Intensity<tspan dx="2.6">(a.u.)</tspan></text>
<g shape-rendering="crispEdges">
<rect x="368.5" y="72.50" width="19" height="9.09" fill="#ffffff"/>
<rect x="368.5" y="81.09" width="19" height="9.09" fill="#ff0000"/>
<rect x="368.5" y="89.67" width="19" height="9.09" fill="#ff1a1a"/>
<rect x="368.5" y="98.26" width="19" height="9.09" fill="#ff2a2a"/>
<rect x="368.5" y="106.85" width="19" height="9.09" fill="#ff3c3c"/>
<rect x="368.5" y="115.44" width="19" height="9.09" fill="#ff4c4c"/>
<rect x="368.5" y="124.03" width="19" height="9.09" fill="#ff5e5e"/>
<rect x="368.5" y="132.61" width="19" height="9.09" fill="#ff6e6e"/>
<rect x="368.5" y="141.20" width="19" height="9.09" fill="#ff8080"/>
<rect x="368.5" y="149.79" width="19" height="9.09" fill="#ff9090"/>
<rect x="368.5" y="158.38" width="19" height="9.09" fill="#ffa2a2"/>
<rect x="368.5" y="166.96" width="19" height="9.09" fill="#ffb2b2"/>
<rect x="368.5" y="175.55" width="19" height="9.09" fill="#ffc4c4"/>
<rect x="368.5" y="184.14" width="19" height="9.09" fill="#ffd4d4"/>
<rect x="368.5" y="192.73" width="19" height="9.09" fill="#ffe6e6"/>
<rect x="368.5" y="201.31" width="19" height="9.09" fill="#fff6f6"/>
<rect x="368.5" y="209.90" width="19" height="9.09" fill="#f6f6ff"/>
<rect x="368.5" y="218.49" width="19" height="9.09" fill="#e6e6ff"/>
<rect x="368.5" y="227.08" width="19" height="9.09" fill="#d4d4ff"/>
<rect x="368.5" y="235.66" width="19" height="9.09" fill="#c4c4ff"/>
<rect x="368.5" y="244.25" width="19" height="9.09" fill="#b2b2ff"/>
<rect x="368.5" y="252.84" width="19" height="9.09" fill="#a2a2ff"/>
<rect x="368.5" y="261.43" width="19" height="9.09" fill="#9090ff"/>
<rect x="368.5" y="270.01" width="19" height="9.09" fill="#8080ff"/>
<rect x="368.5" y="278.60" width="19" height="9.09" fill="#6e6eff"/>
<rect x="368.5" y="287.19" width="19" height="9.09" fill="#5e5eff"/>
<rect x="368.5" y="295.77" width="19" height="9.09" fill="#4c4cff"/>
<rect x="368.5" y="304.36" width="19" height="9.09" fill="#3c3cff"/>
<rect x="368.5" y="312.95" width="19" height="9.09" fill="#2a2aff"/>
<rect x="368.5" y="321.54" width="19" height="9.09" fill="#1a1aff"/>
<rect x="368.5" y="330.12" width="19" height="9.09" fill="#0000ff"/>
<rect x="368.5" y="338.71" width="19" height="9.09" fill="#ffffff"/>
</g>
<rect x="368.5" y="72.5" width="19.1" height="274.8" fill="none" stroke="#000" stroke-width="1.1"/>
<path d="M387.6 81.09H392.5" stroke="#000" stroke-width="1.1"/>
<text x="395.6" y="84.09" font-size="8.1" fill="#000">600.0</text>
<path d="M387.6 132.61H392.5" stroke="#000" stroke-width="1.1"/>
<text x="395.6" y="135.61" font-size="8.1" fill="#000">480.0</text>
<path d="M387.6 184.14H392.5" stroke="#000" stroke-width="1.1"/>
<text x="395.6" y="187.14" font-size="8.1" fill="#000">360.0</text>
<path d="M387.6 235.66H392.5" stroke="#000" stroke-width="1.1"/>
<text x="395.6" y="238.66" font-size="8.1" fill="#000">240.0</text>
<path d="M387.6 287.19H392.5" stroke="#000" stroke-width="1.1"/>
<text x="395.6" y="290.19" font-size="8.1" fill="#000">120.0</text>
<path d="M387.6 338.71H392.5" stroke="#000" stroke-width="1.1"/>
<text x="395.6" y="341.71" font-size="8.1" fill="#000">0.000</text>
</svg>

<div style="left:0;top:413px;width:611px;height:30px;background:linear-gradient(#97b1d2,#bcd4f0)"></div>
<div style="left:0;top:443px;width:3px;height:115px;background:#b9cfea"></div>
<div style="left:2.5px;top:443px;width:1px;height:115px;background:#5b6b80"></div>
<svg style="left:3px;top:422px" width="17" height="17" viewBox="0 0 17 17"><rect x="1" y="1" width="15.5" height="15.5" fill="#000"/><rect x="0" y="0" width="14.5" height="14.5" fill="#1c1c9c"/>
<g fill="#f01818"><rect x="1" y="1" width="3.6" height="2.4"/><rect x="5.5" y="1" width="3.6" height="2.4"/><rect x="10" y="1" width="3.6" height="2.4"/></g>
<g fill="#fff"><rect x="2" y="1.5" width="1.4" height="1.4"/><rect x="6.6" y="1.5" width="1.4" height="1.4"/><rect x="11" y="1.5" width="1.4" height="1.4"/></g>
<g fill="#10e010"><rect x="1" y="4.3" width="3.6" height="1.9"/><rect x="5.5" y="4.3" width="3.6" height="1.9"/><rect x="10" y="4.3" width="3.6" height="1.9"/><rect x="1" y="9.7" width="3.6" height="1.9"/><rect x="5.5" y="9.7" width="3.6" height="1.9"/><rect x="10" y="9.7" width="3.6" height="1.9"/></g>
<g fill="#90f090"><rect x="1" y="7" width="3.6" height="1.9"/><rect x="5.5" y="7" width="3.6" height="1.9"/><rect x="10" y="7" width="3.6" height="1.9"/><rect x="1" y="12.4" width="3.6" height="1.4"/><rect x="5.5" y="12.4" width="3.6" height="1.4"/><rect x="10" y="12.4" width="3.6" height="1.4"/></g></svg>
<div class="t" style="left:23.4px;top:423.3px;font-size:13.2px;letter-spacing:.24px;color:#15244e;-webkit-text-stroke:.3px #15244e">Book3 - Book1 - Copy</div>
<div style="left:3px;top:443px;width:608px;height:115px;background:#000"></div>
<div style="left:3px;top:443px;width:608px;height:24px;background:#20201c"></div>
<div style="left:3px;top:467px;width:43.5px;height:91px;background:#20201c"></div>
<div style="left:47px;top:468px;width:564px;height:63.5px;background:#02023e"></div>
<div style="left:45.9px;top:443px;width:1.2px;height:24px;background:#f0f0f0"></div>
<div style="left:46.0px;top:467px;width:1px;height:91px;background:#6e6e6e"></div>
<div style="left:111.8px;top:443px;width:1.2px;height:24px;background:#f0f0f0"></div>
<div style="left:111.9px;top:467px;width:1px;height:91px;background:#6e6e6e"></div>
<div style="left:178.9px;top:443px;width:1.2px;height:24px;background:#f0f0f0"></div>
<div style="left:179.0px;top:467px;width:1px;height:91px;background:#6e6e6e"></div>
<div style="left:245.9px;top:443px;width:1.2px;height:24px;background:#f0f0f0"></div>
<div style="left:246.0px;top:467px;width:1px;height:91px;background:#6e6e6e"></div>
<div style="left:312.9px;top:443px;width:1.2px;height:24px;background:#f0f0f0"></div>
<div style="left:313.0px;top:467px;width:1px;height:91px;background:#6e6e6e"></div>
<div style="left:379.9px;top:443px;width:1.2px;height:24px;background:#f0f0f0"></div>
<div style="left:380.0px;top:467px;width:1px;height:91px;background:#6e6e6e"></div>
<div style="left:446.9px;top:443px;width:1.2px;height:24px;background:#f0f0f0"></div>
<div style="left:447.0px;top:467px;width:1px;height:91px;background:#6e6e6e"></div>
<div style="left:45.5px;top:467px;width:1.8px;height:91px;background:#d8d8d8"></div>
<div style="left:3px;top:466.3px;width:608px;height:1.5px;background:#e4e4e4"></div>
<div style="left:47px;top:483.1px;width:564px;height:1px;background:#5e5e5e"></div>
<div style="left:3px;top:483.0px;width:43px;height:1.2px;background:#c8c8c8"></div>
<div style="left:47px;top:498.8px;width:564px;height:1px;background:#5e5e5e"></div>
<div style="left:3px;top:498.7px;width:43px;height:1.2px;background:#c8c8c8"></div>
<div style="left:47px;top:514.7px;width:564px;height:1px;background:#5e5e5e"></div>
<div style="left:3px;top:514.6px;width:43px;height:1.2px;background:#c8c8c8"></div>
<div style="left:47px;top:530.4px;width:564px;height:1px;background:#5e5e5e"></div>
<div style="left:3px;top:530.3px;width:43px;height:1.2px;background:#c8c8c8"></div>
<div style="left:47px;top:546.0px;width:564px;height:1px;background:#5e5e5e"></div>
<div style="left:3px;top:545.9px;width:43px;height:1.2px;background:#c8c8c8"></div>
<div style="left:2.5px;top:443.3px;width:43.8px;height:24.2px;background:#000"></div>
<div style="left:2.8px;top:443.6px;width:43.2px;height:23.6px;border:1.6px dotted #fff"></div>
<div style="left:4.9px;top:445.8px;width:38.8px;height:19px;background:#e3e3ea"></div>
<div class="cell" style="left:47.5px;top:447.7px;width:66px;text-align:center;font-size:12.3px">A(X)</div>
<div class="cell" style="left:113.9px;top:447.7px;width:66px;text-align:center;font-size:12.3px">C1(Y)</div>
<div class="cell" style="left:181.0px;top:447.7px;width:66px;text-align:center;font-size:12.3px">C4(Y)</div>
<div class="cell" style="left:248.0px;top:447.7px;width:66px;text-align:center;font-size:12.3px">C7(Y)</div>
<div class="cell" style="left:315.0px;top:447.7px;width:66px;text-align:center;font-size:12.3px">C10(Y)</div>
<div class="cell" style="left:382.0px;top:447.7px;width:66px;text-align:center;font-size:12.3px">C13(Y)</div>
<div class="cell" style="left:9.6px;top:469.2px;width:36px;font-size:12.4px;">Long</div>
<div class="cell" style="left:11.6px;top:485.0px;width:36px;font-size:12.4px;">Units</div>
<div class="cell" style="left:13.3px;top:500.8px;width:36px;font-size:12.4px;">Com</div>
<div class="cell" style="left:14.2px;top:516.6px;width:36px;font-size:12.4px;">F(x)=</div>
<div class="cell" style="left:33.2px;top:532.4px;width:36px;font-size:12.4px;">1</div>
<div class="cell" style="left:33.2px;top:548.1px;width:36px;font-size:12.4px;height:9.9px">2</div>
<div class="cell" style="left:49px;top:469.4px;width:63px;font-size:12.3px">2θ(degree)</div>
<div class="cell" style="left:117.5px;top:469.4px;width:61px;font-size:12.3px">Intensity(a.</div>
<div class="cell" style="left:112.9px;top:501.2px;width:66px;text-align:center;font-size:12.3px">1</div>
<div class="cell" style="left:180.0px;top:501.2px;width:66px;text-align:center;font-size:12.3px">2</div>
<div class="cell" style="left:247.0px;top:501.2px;width:66px;text-align:center;font-size:12.3px">3</div>
<div class="cell" style="left:314.0px;top:501.2px;width:66px;text-align:center;font-size:12.3px">4</div>
<div class="cell" style="left:381.0px;top:501.2px;width:66px;text-align:center;font-size:12.3px">5</div>
<div class="cell" style="left:48.1px;top:533px;width:60px;text-align:right;font-size:12.3px">5</div>
<div class="cell" style="left:48.1px;top:548.7px;width:60px;text-align:right;font-size:12.3px;height:9.3px">5.0204</div>
<div class="cell" style="left:115.2px;top:533px;width:60px;text-align:right;font-size:12.3px">5</div>
<div class="cell" style="left:115.2px;top:548.7px;width:60px;text-align:right;font-size:12.3px;height:9.3px">11</div>
<div class="cell" style="left:182.2px;top:533px;width:60px;text-align:right;font-size:12.3px">7</div>
<div class="cell" style="left:182.2px;top:548.7px;width:60px;text-align:right;font-size:12.3px;height:9.3px">12</div>
<div class="cell" style="left:249.2px;top:533px;width:60px;text-align:right;font-size:12.3px">4</div>
<div class="cell" style="left:249.2px;top:548.7px;width:60px;text-align:right;font-size:12.3px;height:9.3px">13</div>
<div class="cell" style="left:316.2px;top:533px;width:60px;text-align:right;font-size:12.3px">5</div>
<div class="cell" style="left:316.2px;top:548.7px;width:60px;text-align:right;font-size:12.3px;height:9.3px">3</div>
<div style="left:0;top:558px;width:611px;height:17px;background:linear-gradient(#e2e2e2,#f2f2f2 30%,#ececec);border-top:1px solid #cfcfcf"></div>
<div style="left:20.5px;top:560px;width:600px;height:13px;border:1px solid #9a9a9a;border-radius:3px;background:linear-gradient(#f6f6f6,#e6e6ea 50%,#d2d2da)"></div>
<svg style="left:0;top:558px" width="8" height="17"><path d="M4.5 4v8l-4.5-4z" fill="#222"/></svg>
<div style="left:0;top:575px;width:611px;height:30px;background:linear-gradient(#ffffff 0,#f3f5fa 4px,#e4e8f2 12px,#cfd4e6 24px,#c3c8dd 27px,#8e94b4 28px,#dfe3ee 29px)"></div>
<div style="left:304px;top:577px;width:12px;height:25px;border-radius:0 5px 5px 0;background:linear-gradient(#e8ecf5,#b9c0d8 60%,#8f97b8)"></div>
<svg style="left:0;top:575px" width="611" height="30" viewBox="0 575 611 30">
<path d="M5 597L19 583.5" stroke="#000" stroke-width="1.2"/><path d="M24.3 588l5.4 0-2.7 3.2z" fill="#000"/>
<g fill="#000"><rect x="36.8" y="593.3" width="3.3" height="3.3"/><rect x="41.7" y="587.9" width="3.3" height="3.3"/><rect x="46.6" y="583" width="3.3" height="3.3"/></g><path d="M54.8 588l5.4 0-2.7 3.2z" fill="#000"/>
<path d="M67.5 596.5L80 584" stroke="#0000ff" stroke-width="1.3"/><g fill="#0000ff"><rect x="66" y="595" width="3.2" height="3.2"/><rect x="70.7" y="590.4" width="3.2" height="3.2"/><rect x="74.2" y="586" width="3.2" height="3.2"/><rect x="78.6" y="582.3" width="3.2" height="3.2"/></g><path d="M85.6 588l5.4 0-2.7 3.2z" fill="#000"/>
<g fill="#e00000"><rect x="97.4" y="588" width="4" height="10"/><rect x="102.4" y="582.5" width="4.4" height="15.5"/><rect x="107.8" y="588" width="4" height="10"/></g><path d="M96.5 598.3H113" stroke="#000" stroke-width="1"/><path d="M116.6 588l5.4 0-2.7 3.2z" fill="#000"/>
<path d="M128.300 597.500V589.300l6.200-7.200c2.200 0 3.200 5 5 7.200s3 2.600 4.800 2.800v5.400z" fill="#fff" stroke="#000" stroke-width="1.100"/><path d="M130.800 593c1.600-3 2.600-5.200 4.200-5.200s2.600 4 4.200 5.600 3 2 5 2.200M130.800 597c1.600-2 2.600-5 4.200-5s2.600 2.600 4.200 3.600 3 1.500 5 1.500" fill="none" stroke="#000" stroke-width="1"/><path d="M147.3 588l5.4 0-2.7 3.2z" fill="#000"/>
<rect x="159.500" y="582.500" width="15.500" height="15" fill="#fff" stroke="#000" stroke-width="1.100"/><g fill="#ff1010"><rect x="162.500" y="584.400" width="2" height="1"/><rect x="167" y="583.800" width="2" height="1"/><rect x="172" y="584.800" width="2" height="1"/><rect x="160.800" y="588.500" width="2" height="1"/><rect x="160.500" y="594.500" width="2" height="1"/><rect x="172" y="592.500" width="2" height="1"/><rect x="170.500" y="595.500" width="2" height="1"/></g><path d="M164.500 593.500l7-6.500" stroke="#a8a8a8" stroke-width="3.200" stroke-linecap="round"/><path d="M165 593l3.500-3" stroke="#303030" stroke-width="1.800" stroke-linecap="round"/><path d="M178.6 588l5.4 0-2.7 3.2z" fill="#000"/>
<path d="M190 586.500l3.5-3.500 3.500 3.500 3.500-3.500 3.500 1.500 2.500 3v10.500h-16.500z" fill="#00c800"/><path d="M190 589.500l3.500-2 3.500 2.500 3.500-3 3.500 3 2.500 .5v7.500h-16.500z" fill="#e00000"/><path d="M190 592.500l3.500-2 3.500 2.500 3.500-3 3.500 3.500 2.500 .5v4h-16.500z" fill="#000"/><path d="M209.8 588l5.4 0-2.7 3.2z" fill="#000"/>
<path d="M229 582.500l7.800 13.800h-15.600z" fill="#fff" stroke="#000" stroke-width="1.2"/><g fill="#1010ff"><rect x="228" y="587" width="2" height="2"/><rect x="226" y="590.500" width="2" height="2"/><rect x="230" y="590.500" width="2" height="2"/><rect x="224.500" y="593.500" width="2" height="2"/><rect x="228" y="593.500" width="2" height="2"/><rect x="231.500" y="593.500" width="2" height="2"/></g><path d="M240.6 588l5.4 0-2.7 3.2z" fill="#000"/>
<path d="M257 582.500v15M263.500 582.500v16" stroke="#000" stroke-width="1"/><rect x="254.800" y="585.500" width="4.400" height="8.500" fill="#fff" stroke="#000" stroke-width="1"/><rect x="261" y="586" width="5" height="9" fill="#f00000"/><path d="M263.500 582.500v16" stroke="#e00000" stroke-width="1"/><path d="M272.1 588l5.4 0-2.7 3.2z" fill="#000"/>
<path d="M285.500 585.500l3-2h10v12.500l-3 2h-10z" fill="#e8d800" stroke="#000" stroke-width="1.1"/><rect x="288" y="587.500" width="8" height="7.500" fill="#fffbe0" stroke="#000" stroke-width=".7"/><path d="M290 594v-3M292 594v-4.500M294 594v-2" stroke="#e00000" stroke-width="1.1"/>
<path d="M307 593h6" stroke="#000" stroke-width="1.2"/><path d="M307 595.500l6 0-3 3.500z" fill="#000"/>
<path d="M321 582v16" stroke="#8a90a8" stroke-width="1.600" stroke-dasharray="1.600 1.600"/>
<path d="M329 588.500l6-6h8.500v8l-6 7H329z" fill="#fff" stroke="#000" stroke-width="1.200"/><path d="M330.500 592l2.500-2.500 2.500 3 2.500-4 3 2" stroke="#e00000" stroke-width="1.100" fill="none"/><path d="M330.500 595l2.500-2.500 2.500 3 2.500-4 2.500 2" stroke="#00a000" stroke-width="1.100" fill="none"/><path d="M332 589l2-2 2.500 2.500 2.500-3 2 1" stroke="#0000e0" stroke-width="1.100" fill="none"/><path d="M348.0 588l5.4 0-2.7 3.2z" fill="#000"/>
<path d="M361.300 580v20" stroke="#9aa0b8" stroke-width="1"/><path d="M362.300 580v20" stroke="#fff" stroke-width="1"/>
<path d="M367.500 590l5-7.500h10.500l-5 7.500z" fill="#2030e0" stroke="#000" stroke-width=".9"/><path d="M369.500 590l3.500-5.500h7.500l-3.500 5.500z" fill="#20c020"/><path d="M371.500 589.500l2.500-3.800h4.500l-2.500 3.800z" fill="#f0e000"/><path d="M373.500 589l1.300-2h2.200l-1.300 2z" fill="#e02020"/><path d="M367.500 590v6l10.500 .0 5-7.500v-6l-5 7.500z" fill="#7a86c0" stroke="#000" stroke-width=".9"/><path d="M367.500 592.500h10.500l5-7.500M367.500 594.500h10.500l5-7.500" stroke="#20a020" stroke-width="1" fill="none"/><path d="M386.9 588l5.4 0-2.7 3.2z" fill="#000"/>
<path d="M399 597.500v-9l4-6h9.500v10l-4 5z" fill="#fff" stroke="#000" stroke-width="1.100"/><path d="M400.500 597v-8l1.500-1.500v8z" fill="#000"/><rect x="403" y="586" width="2.500" height="10.500" fill="#e8e000" stroke="#000" stroke-width=".6"/><rect x="406.500" y="584" width="2.500" height="10.500" fill="#20c020" stroke="#000" stroke-width=".6"/><rect x="410" y="585" width="2" height="8" fill="#e8e000" stroke="#000" stroke-width=".6"/><path d="M417.6 588l5.4 0-2.7 3.2z" fill="#000"/>
</svg>
<div style="left:609px;top:413px;width:2px;height:162px;background:#edf1f7"></div><div style="left:425.6px;top:413.5px;width:183.5px;height:161px;background:#fbfbfb;border:1px solid #a8a8a8;border-left-color:#cfcfcf;border-right:1.5px solid #5a5a5a;box-shadow:2px 2px 3px rgba(0,0,0,.35)"></div>
<div class="mi" style="top:422.2px;font-size:12.2px;letter-spacing:-0.230px" id="mi0">Contour - Color Fill</div>
<div class="mi" style="top:444.2px;font-size:12.2px;letter-spacing:-0.407px" id="mi1">Contour - B/W Lines + Labels</div>
<div class="mi" style="top:466.2px;font-size:12.2px;letter-spacing:-0.845px" id="mi2">Gray Scale Map</div>
<div class="mi" style="top:488.2px;font-size:12.2px;letter-spacing:-0.600px" id="mi3">Heat Map</div>
<div class="mi" style="top:510.2px;font-size:12.2px;letter-spacing:-0.584px" id="mi4">Polar Contour theta(X) r(Y)</div>
<div class="mi" style="top:532.2px;font-size:12.2px;letter-spacing:-0.584px" id="mi5">Polar Contour r(X) theta(Y)</div>
<svg style="left:432px;top:414px" width="20" height="140" viewBox="432 414 20 140">
<rect x="432.500" y="422" width="15.700" height="14.300" fill="#00f400"/>
<circle cx="435.5" cy="426" r="2.200" fill="#f4f400"/><circle cx="435.5" cy="426" r="1.150" fill="#ff0000"/>
<circle cx="443.3" cy="426" r="2.200" fill="#f4f400"/><circle cx="443.3" cy="426" r="1.150" fill="#ff0000"/>
<circle cx="435.5" cy="433.7" r="2.200" fill="#f4f400"/><circle cx="435.5" cy="433.7" r="1.150" fill="#ff0000"/>
<circle cx="443.3" cy="433.7" r="2.200" fill="#f4f400"/><circle cx="443.3" cy="433.7" r="1.150" fill="#ff0000"/>
<circle cx="439.400" cy="429.900" r="2.300" fill="#1818ff"/><circle cx="439.400" cy="429.900" r="1" fill="#d8ffd8"/>
<rect x="438.5" y="425.1" width="1.800" height="1.800" fill="#e8ffe8"/>
<rect x="434.6" y="429" width="1.800" height="1.800" fill="#e8ffe8"/>
<rect x="442.4" y="429" width="1.800" height="1.800" fill="#e8ffe8"/>
<rect x="438.5" y="432.8" width="1.800" height="1.800" fill="#e8ffe8"/>
<path d="M437 422.200a2.300 2.300 0 0 0 4.600 0M448 424a2.300 2.300 0 0 0 0 4.400M448 429.500a2.300 2.300 0 0 0 0 4.400" fill="none" stroke="#1818ff" stroke-width="1.100"/>
<path d="M432.500 422v14.500h15.800" stroke="#000" stroke-width="1" fill="none"/>
<g fill="none" stroke="#000" stroke-width="1.300"><rect x="433.200" y="445" width="4.800" height="4.800"/><rect x="441.700" y="445" width="4.800" height="4.800"/><path d="M439.800 444.300v7.500M432.500 452.300h15.500M433.200 458.500v-3.600h4.600v3.600M441.800 458.500v-3.600h4.600v3.600M435.500 456.500v2M444.100 456.500v2M439.800 453v5.500M432.500 458.300h15.500"/></g><rect x="434.900" y="446.700" width="1.500" height="1.500" fill="#000"/><rect x="443.400" y="446.700" width="1.500" height="1.500" fill="#000"/><path d="M432.700 444.300v14.300" stroke="#000" stroke-width="1"/>
<path d="M432.700 465.800v14.800h15.500" stroke="#000" stroke-width="1.100" fill="none"/>
<circle cx="435.3" cy="470.2" r="2.400" fill="#b0b0b0"/><circle cx="435.3" cy="470.2" r="1.300" fill="#181818"/>
<circle cx="443.3" cy="470.2" r="2.400" fill="#b0b0b0"/><circle cx="443.3" cy="470.2" r="1.300" fill="#181818"/>
<circle cx="435.3" cy="477.8" r="2.400" fill="#b0b0b0"/><circle cx="435.3" cy="477.8" r="1.300" fill="#181818"/>
<circle cx="443.3" cy="477.8" r="2.400" fill="#b0b0b0"/><circle cx="443.3" cy="477.8" r="1.300" fill="#181818"/>
<rect x="432.50" y="487.20" width="5.300" height="5.100" fill="#008000"/>
<rect x="437.70" y="487.20" width="5.300" height="5.100" fill="#00ff00"/>
<rect x="442.90" y="487.20" width="5.300" height="5.100" fill="#808000"/>
<rect x="432.50" y="492.20" width="5.300" height="5.100" fill="#ff0000"/>
<rect x="437.70" y="492.20" width="5.300" height="5.100" fill="#ffff00"/>
<rect x="442.90" y="492.20" width="5.300" height="5.100" fill="#00ffff"/>
<rect x="432.50" y="497.20" width="5.300" height="5.100" fill="#800000"/>
<rect x="437.70" y="497.20" width="5.300" height="5.100" fill="#ff0000"/>
<rect x="442.90" y="497.20" width="5.300" height="5.100" fill="#0000ff"/>
<path d="M432.500 487v15.500h15.800" stroke="#000" stroke-width="1" fill="none"/>
<path d="M433.500 509v16" stroke="#000" stroke-width="1.100"/><path d="M432 509v16" stroke="#000" stroke-width="1.800" stroke-dasharray="1 1.600"/>
<path d="M436.700 510.500v4.500M436.700 512c.500-1.200 1.500-1.600 2.600-1.300" stroke="#000" stroke-width="1.100" fill="none"/>
<path d="M435.500 519l3.500-3.500 4 0 1.500 5-2 4.500-5.500 .5z" fill="#18d018"/><path d="M435.200 519.5l4-4 3 .3-2.500 3z" fill="#000"/><path d="M435.500 523.5c2 2.500 5.500 2.500 8 0M439.500 521v3.500M437 522h5.500" stroke="#000" stroke-width="1" fill="none"/>
<path d="M433.500 531v16" stroke="#000" stroke-width="1.100"/><path d="M432 531v16" stroke="#000" stroke-width="1.800" stroke-dasharray="1 1.600"/>
<ellipse cx="437.600" cy="535" rx="1.700" ry="2.600" fill="none" stroke="#000" stroke-width="1"/><path d="M436 535h3.200" stroke="#000" stroke-width=".8"/>
<path d="M435.500 540.5l3.500-3.500 4 0 1.500 5-2 4.500-5.500 .5z" fill="#18d018"/><path d="M435.200 541l4-4 3 .3-2.500 3z" fill="#000"/><path d="M435.500 545c2 2.500 5.500 2.500 8 0M439.500 542.5v3.500M437 543.5h5.500" stroke="#000" stroke-width="1" fill="none"/>
</svg>

<div style="left:423px;top:546.8px;width:183px;height:53px;background:rgba(255,255,255,.9)"></div>
<svg style="left:420px;top:545px" width="90" height="57" viewBox="420 545 90 57" role="img" aria-label="MH"><title>MH</title>
<g fill="#de2d28">
<rect x="423.1" y="547.2" width="6.2" height="52.600"/>
<path d="M423.100 547.200H446.200L451.200 561.800L456.400 547.200H479.100V552.700H461.700L454.800 573.500V599.800H447.500V573.500L440.600 552.700H423.100Z"/>
<rect x="472.300" y="547.200" width="6.800" height="52.600"/>
<rect x="494.200" y="547.200" width="6.800" height="52.600"/>
<rect x="472.300" y="566.700" width="28" height="8.300"/>
</g>
<rect x="423" y="573.100" width="78.500" height="1" fill="#fff" opacity=".92"/>
</svg>
<div class="t" style="left:510px;top:549.2px;font-size:19px;color:#4c4c4c;font-family:'Noto Sans CJK SC','Liberation Sans',sans-serif;font-weight:400">中国煤化工</div>
<div style="left:511px;top:572.2px;width:94.500px;height:2px;background:#d93030"></div>
<div class="t" id="cn" style="left:510.3px;top:578.8px;font-size:18.5px;color:#747474;letter-spacing:7px">CNMHG</div>

<svg style="left:0;top:0" width="611" height="605" viewBox="0 0 611 605"><g fill="#fb1a14">
<polygon points="34.5,461.5 23.1,460.9 10.8,447.0 28.6,450.7 30.2,453.5 34.5,459.7 36.0,460.7 60.0,467.7 100.0,479.5 140.0,491.1 200.0,508.3 280.0,531.5 350.0,552.5 426.0,575.4 426.0,585.2 350.0,561.8 280.0,540.1 200.0,514.5 140.0,495.1 100.0,482.3 60.0,469.7 36.0,462.1"/>
<polygon points="369.7,373.6 384.7,381.8 379.8,385.0 379.8,388.0 393.6,410.0 405.7,430.0 417.6,450.0 422.7,460.0 427.4,470.0 432.9,482.5 432.1,482.5 423.2,470.0 416.2,460.0 409.7,450.0 398.5,430.0 387.4,410.0 375.8,388.0 375.5,390.8 370.3,390.4"/>
<polygon points="445.3,502.6 453.5,512.9 450.0,513.4 451.4,546.8 445.8,546.8 442.5,516.2 438.5,516.0"/>
</g></svg>
</div>
</body></html>
